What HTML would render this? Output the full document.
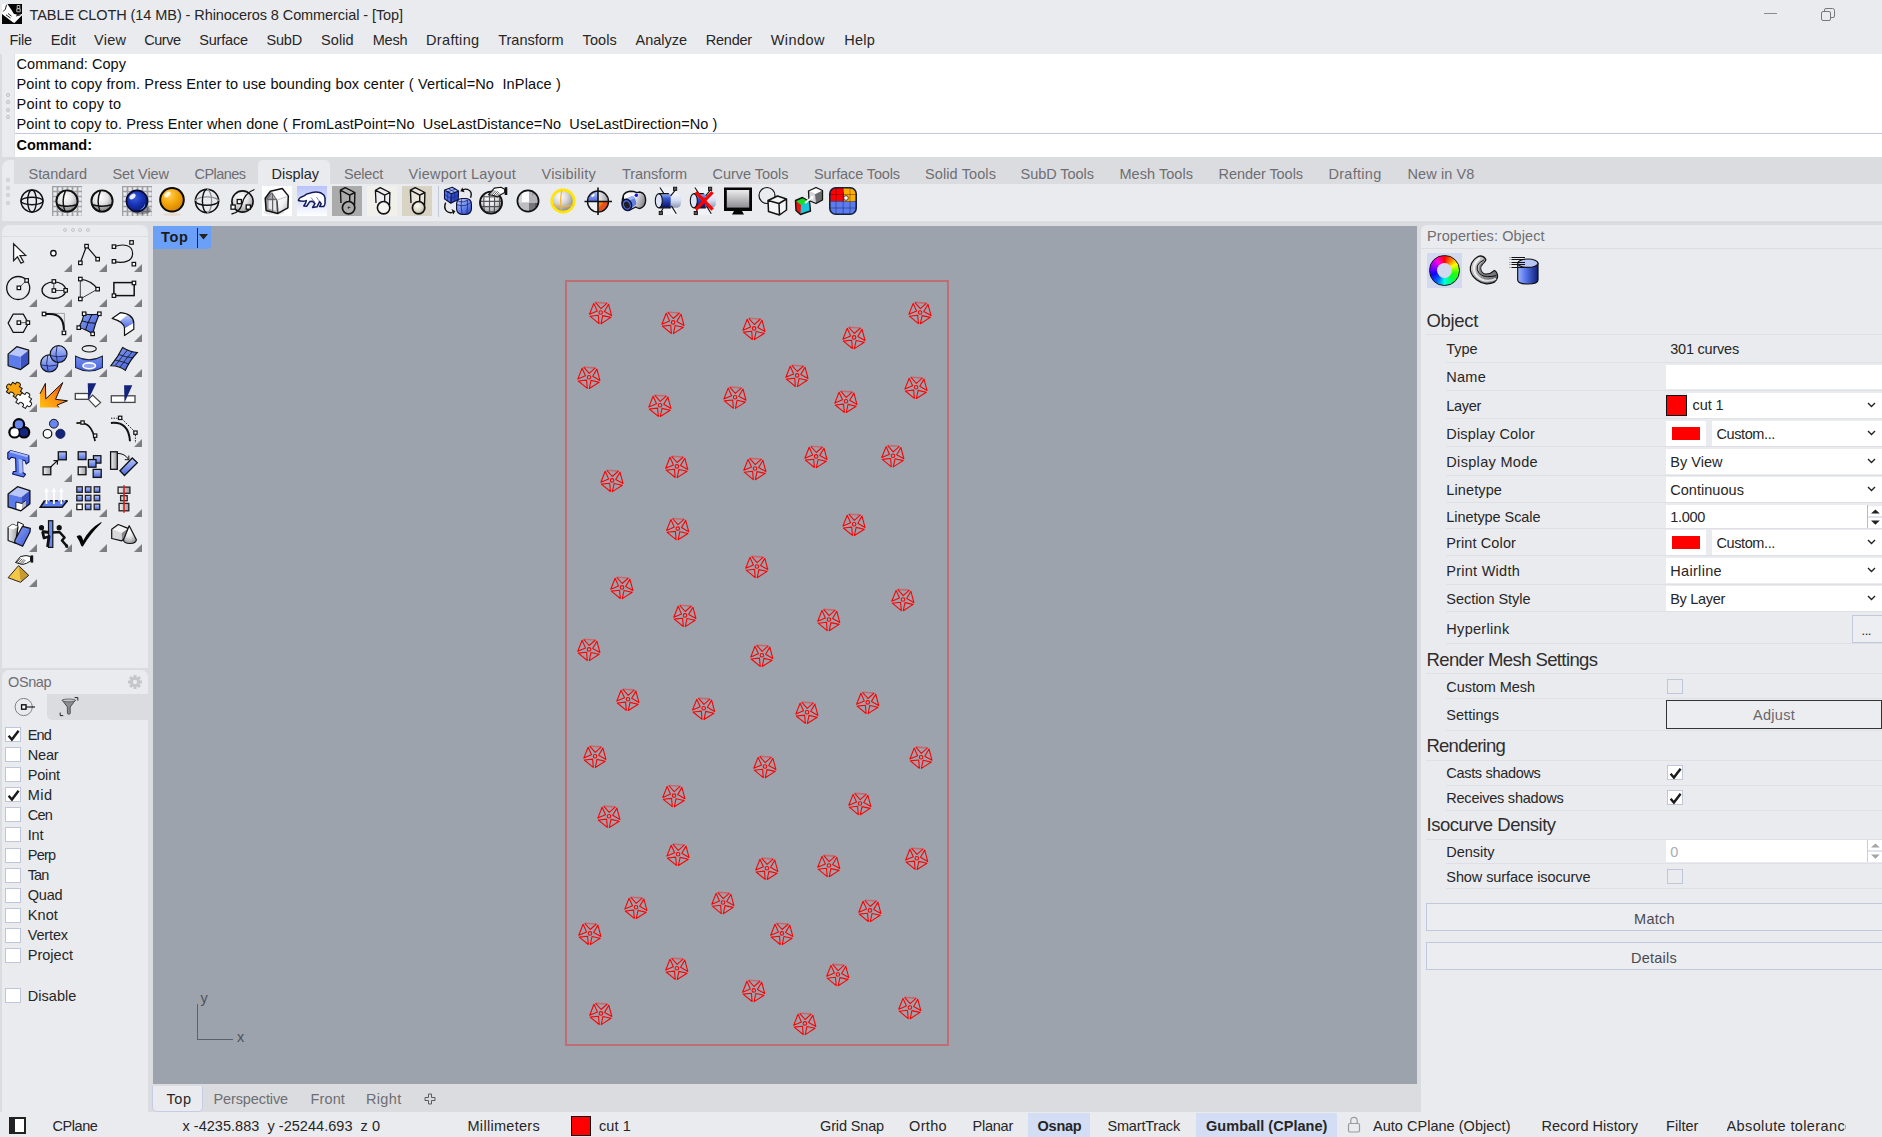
<!DOCTYPE html>
<html><head><meta charset="utf-8"><title>Rhino</title>
<style>
html,body{margin:0;padding:0;}
body{width:1882px;height:1137px;overflow:hidden;background:#eaebef;font-family:"Liberation Sans",sans-serif;position:relative;}
#r{position:absolute;left:0;top:0;width:1882px;height:1137px;overflow:hidden;}
#r div, #r svg{position:absolute;box-sizing:border-box;}
.t{white-space:pre;line-height:1;}
</style></head><body><div id="r">
<div style="left:0px;top:221px;width:1882px;height:5px;background:#dbdce0;"></div>
<div style="left:0px;top:221px;width:150px;height:14px;background:#dbdce0;"></div>
<div style="left:0px;top:668px;width:150px;height:10px;background:#dbdce0;"></div>
<div style="left:1417px;top:221px;width:465px;height:12px;background:#dbdce0;"></div>
<div style="left:0px;top:54px;width:2px;height:1058px;background:#dbdce0;"></div>
<div style="left:148px;top:221px;width:3px;height:891px;background:#dbdce0;"></div>
<div style="left:0px;top:52px;width:1882px;height:2px;background:#eaebef;"></div>
<div style="left:2px;top:54px;width:14px;height:103.3px;background:#eaebef;border-radius:5px 0 0 5px;"></div>
<div style="left:14px;top:54px;width:1px;height:103.3px;background:#e0e1e6;"></div>
<div style="left:15px;top:54px;width:1867px;height:103.3px;background:#ffffff;"></div>
<div style="left:15px;top:133px;width:1867px;height:1px;background:#c3c9dc;"></div>
<div style="left:5.6px;top:92.6px;width:4px;height:4px;border-radius:2px;border:1px solid #bcbdc2"></div>
<div style="left:5.6px;top:100.2px;width:4px;height:4px;border-radius:2px;border:1px solid #bcbdc2"></div>
<div style="left:5.6px;top:107.7px;width:4px;height:4px;border-radius:2px;border:1px solid #bcbdc2"></div>
<div style="left:5.6px;top:115.2px;width:4px;height:4px;border-radius:2px;border:1px solid #bcbdc2"></div>
<div style="left:0px;top:157px;width:1882px;height:27px;background:#dbdce0;"></div>
<div style="left:2px;top:160px;width:12px;height:60px;background:#eaebef;border-radius:8px 0 0 8px;"></div>
<div style="left:14px;top:184px;width:1868px;height:37px;background:#eaebef;"></div>
<div style="left:6px;top:178px;width:4px;height:4px;border-radius:2px;border:1px solid #c4c5ca"></div>
<div style="left:6px;top:186px;width:4px;height:4px;border-radius:2px;border:1px solid #c4c5ca"></div>
<div style="left:6px;top:193px;width:4px;height:4px;border-radius:2px;border:1px solid #c4c5ca"></div>
<div style="left:6px;top:201px;width:4px;height:4px;border-radius:2px;border:1px solid #c4c5ca"></div>
<div style="left:258px;top:160px;width:72px;height:25px;background:#eaebef;border-radius:5px 5px 0 0;"></div>
<div style="left:1764px;top:13px;width:13px;height:1px;background:#8a8a8e"></div>
<svg style="left:1821px;top:8px" width="14" height="13" viewBox="0 0 14 13"><rect x="0.5" y="3.5" width="9" height="9" rx="1.5" fill="none" stroke="#77777b"/><path d="M3.5 3.5 V2 Q3.5 0.5 5 0.5 H11.5 Q13.5 0.5 13.5 2.5 V8 Q13.5 9.5 12 9.5 H9.5" fill="none" stroke="#77777b"/></svg>
<div style="left:2px;top:225px;width:146px;height:443px;background:#eaebef;border-radius:7px 7px 0 0;"></div>
<div style="left:2px;top:236px;width:146px;height:1px;background:#dddee3;"></div>
<div style="left:63px;top:227.5px;width:4px;height:4px;border-radius:2px;border:1px solid #c4c5ca"></div>
<div style="left:70.5px;top:227.5px;width:4px;height:4px;border-radius:2px;border:1px solid #c4c5ca"></div>
<div style="left:78px;top:227.5px;width:4px;height:4px;border-radius:2px;border:1px solid #c4c5ca"></div>
<div style="left:85.5px;top:227.5px;width:4px;height:4px;border-radius:2px;border:1px solid #c4c5ca"></div>
<div style="left:0px;top:668px;width:150px;height:2px;background:#dbdce0;"></div>
<div style="left:2px;top:670px;width:146px;height:442px;background:#eaebef;border-radius:7px 7px 0 0;"></div>
<div style="left:47px;top:694px;width:101px;height:25.5px;background:#dbdce0;border-radius:0 0 0 5px;"></div>
<div style="left:5px;top:727px;width:16px;height:15px;background:#fff;border:1px solid #c0c6d9"><svg style="left:0.5px;top:1px" width="13" height="13" viewBox="0 0 13 13"><path d="M1.6 6.8 L4.9 10.6 L11.6 1.8" fill="none" stroke="#1a1a1a" stroke-width="2.4"/></svg></div>
<div style="left:5px;top:747px;width:16px;height:15px;background:#fff;border:1px solid #c0c6d9"></div>
<div style="left:5px;top:767px;width:16px;height:15px;background:#fff;border:1px solid #c0c6d9"></div>
<div style="left:5px;top:787px;width:16px;height:15px;background:#fff;border:1px solid #c0c6d9"><svg style="left:0.5px;top:1px" width="13" height="13" viewBox="0 0 13 13"><path d="M1.6 6.8 L4.9 10.6 L11.6 1.8" fill="none" stroke="#1a1a1a" stroke-width="2.4"/></svg></div>
<div style="left:5px;top:807px;width:16px;height:15px;background:#fff;border:1px solid #c0c6d9"></div>
<div style="left:5px;top:827px;width:16px;height:15px;background:#fff;border:1px solid #c0c6d9"></div>
<div style="left:5px;top:848px;width:16px;height:15px;background:#fff;border:1px solid #c0c6d9"></div>
<div style="left:5px;top:868px;width:16px;height:15px;background:#fff;border:1px solid #c0c6d9"></div>
<div style="left:5px;top:888px;width:16px;height:15px;background:#fff;border:1px solid #c0c6d9"></div>
<div style="left:5px;top:908px;width:16px;height:15px;background:#fff;border:1px solid #c0c6d9"></div>
<div style="left:5px;top:928px;width:16px;height:15px;background:#fff;border:1px solid #c0c6d9"></div>
<div style="left:5px;top:948px;width:16px;height:15px;background:#fff;border:1px solid #c0c6d9"></div>
<div style="left:5px;top:988px;width:16px;height:15px;background:#fff;border:1px solid #c0c6d9"></div>
<div style="left:150px;top:225px;width:1271px;height:887px;background:#dbdce0;"></div>
<div style="left:153px;top:226px;width:1264px;height:857.5px;background:#9da3ac;"></div>
<div style="left:153px;top:226px;width:58px;height:23px;background:#6aa0f7;border-radius:0 0 4px 0;"></div>
<div style="left:197px;top:228px;width:1px;height:20px;background:#222;"></div>
<svg style="left:199px;top:234px" width="9" height="6" viewBox="0 0 9 6"><path d="M0 0 H9 L4.5 5.5Z" fill="#222"/></svg>
<div style="left:197px;top:1004px;width:1px;height:36px;background:#5c6068;"></div>
<div style="left:197px;top:1039px;width:36px;height:1px;background:#5c6068;"></div>
<div style="left:151.5px;top:1085.5px;width:51.5px;height:26.3px;background:#eaebef;border-radius:0 0 5px 5px;border:1px solid #c5cde6;border-top:none;"></div>
<svg style="left:424px;top:1093px" width="12" height="12" viewBox="0 0 12 12"><path d="M4.5 1 H7.5 V4.5 H11 V7.5 H7.5 V11 H4.5 V7.5 H1 V4.5 H4.5Z" fill="none" stroke="#5b5b5f" stroke-width="1"/></svg>
<div style="left:0px;top:1112px;width:1882px;height:25px;background:#eaebef;"></div>
<div style="left:9px;top:1117px;width:17px;height:17px;border:2px solid #222;border-left-width:6px;background:#fff"></div>
<div style="left:570.5px;top:1115.5px;width:20px;height:20px;background:#ff0000;border:1.5px solid #111;"></div>
<div style="left:1027.5px;top:1113px;width:62.5px;height:24px;background:#d3ddf3;"></div>
<div style="left:1196px;top:1113px;width:140.5px;height:24px;background:#d3ddf3;"></div>
<svg style="left:1347px;top:1116px" width="14" height="17" viewBox="0 0 14 17"><rect x="1.5" y="7.5" width="11" height="8.5" rx="1.5" fill="none" stroke="#9a9a9e" stroke-width="1.2"/><path d="M3.8 7.5 V4.5 Q3.8 1.3 7 1.3 Q10.2 1.3 10.2 4.5 V7.5" fill="none" stroke="#9a9a9e" stroke-width="1.2"/></svg>
<div style="left:1421px;top:224.5px;width:461px;height:888px;background:#eaebef;border-radius:6px 0 0 0;"></div>
<div style="left:1421px;top:248px;width:461px;height:1px;background:#dcdde2;"></div>
<div style="left:1427px;top:253px;width:35px;height:35px;background:#d3daf0;"></div>
<div style="left:1426px;top:334px;width:456px;height:1px;background:#dfe0e5;"></div>
<div style="left:1446px;top:362px;width:436px;height:1px;background:#dfe0e5;"></div>
<div style="left:1446px;top:390px;width:436px;height:1px;background:#dfe0e5;"></div>
<div style="left:1446px;top:418px;width:436px;height:1px;background:#dfe0e5;"></div>
<div style="left:1446px;top:446px;width:436px;height:1px;background:#dfe0e5;"></div>
<div style="left:1446px;top:475px;width:436px;height:1px;background:#dfe0e5;"></div>
<div style="left:1446px;top:502px;width:436px;height:1px;background:#dfe0e5;"></div>
<div style="left:1446px;top:528px;width:436px;height:1px;background:#dfe0e5;"></div>
<div style="left:1446px;top:555px;width:436px;height:1px;background:#dfe0e5;"></div>
<div style="left:1446px;top:584px;width:436px;height:1px;background:#dfe0e5;"></div>
<div style="left:1446px;top:611px;width:436px;height:1px;background:#dfe0e5;"></div>
<div style="left:1446px;top:643px;width:436px;height:1px;background:#dfe0e5;"></div>
<div style="left:1666px;top:364.5px;width:216px;height:24.5px;background:#fff;"></div>
<div style="left:1687px;top:393px;width:195px;height:25px;background:#fff;"></div>
<div style="left:1666px;top:394.5px;width:21px;height:21px;background:#ff0000;border:1.5px solid #111;"></div>
<svg style="left:1866.5px;top:402px" width="9" height="6" viewBox="0 0 9 6"><path d="M1 1 L4.5 4.5 L8 1" fill="none" stroke="#222" stroke-width="1.4"/></svg>
<div style="left:1666px;top:420.7px;width:40px;height:25px;background:#fff;"></div>
<div style="left:1672px;top:427.2px;width:28px;height:12.5px;background:#ff0000;"></div>
<div style="left:1711.5px;top:420.7px;width:170.5px;height:25px;background:#fff;"></div>
<svg style="left:1866.5px;top:430px" width="9" height="6" viewBox="0 0 9 6"><path d="M1 1 L4.5 4.5 L8 1" fill="none" stroke="#222" stroke-width="1.4"/></svg>
<div style="left:1666px;top:529.6px;width:40px;height:25px;background:#fff;"></div>
<div style="left:1672px;top:536.1px;width:28px;height:12.5px;background:#ff0000;"></div>
<div style="left:1711.5px;top:529.6px;width:170.5px;height:25px;background:#fff;"></div>
<svg style="left:1866.5px;top:539px" width="9" height="6" viewBox="0 0 9 6"><path d="M1 1 L4.5 4.5 L8 1" fill="none" stroke="#222" stroke-width="1.4"/></svg>
<div style="left:1666px;top:448.7px;width:216px;height:25px;background:#fff;"></div>
<svg style="left:1866.5px;top:458px" width="9" height="6" viewBox="0 0 9 6"><path d="M1 1 L4.5 4.5 L8 1" fill="none" stroke="#222" stroke-width="1.4"/></svg>
<div style="left:1666px;top:476.7px;width:216px;height:25px;background:#fff;"></div>
<svg style="left:1866.5px;top:486px" width="9" height="6" viewBox="0 0 9 6"><path d="M1 1 L4.5 4.5 L8 1" fill="none" stroke="#222" stroke-width="1.4"/></svg>
<div style="left:1666px;top:557.6px;width:216px;height:25px;background:#fff;"></div>
<svg style="left:1866.5px;top:567px" width="9" height="6" viewBox="0 0 9 6"><path d="M1 1 L4.5 4.5 L8 1" fill="none" stroke="#222" stroke-width="1.4"/></svg>
<div style="left:1666px;top:585.6px;width:216px;height:25px;background:#fff;"></div>
<svg style="left:1866.5px;top:595px" width="9" height="6" viewBox="0 0 9 6"><path d="M1 1 L4.5 4.5 L8 1" fill="none" stroke="#222" stroke-width="1.4"/></svg>
<div style="left:1666px;top:505px;width:201px;height:23px;background:#fff;"></div>
<div style="left:1867px;top:505px;width:1px;height:23px;background:#b7bccd;"></div>
<svg style="left:1868px;top:505.5px" width="14" height="22" viewBox="0 0 14 22"><rect x="0" y="0" width="14" height="22" fill="#fff"/><path d="M0 11 H14" stroke="#c3c9dc" stroke-width="1"/><path d="M3 7.6 L7.4 3.4 L11.8 7.6Z M3 14.6 L7.4 18.8 L11.8 14.6Z" fill="#222"/></svg>
<div style="left:1851.5px;top:614.5px;width:31px;height:28px;background:#edeef2;border:1px solid #c3c9dc;"></div>
<div style="left:1426px;top:673px;width:456px;height:1px;background:#dfe0e5;"></div>
<div style="left:1667px;top:679px;width:15px;height:15px;background:#fff;border:1px solid #c6c9d6"></div>
<div style="left:1667px;top:679px;width:16px;height:15px;background:#eaebef;border:1px solid #c0c6d9"></div>
<div style="left:1446px;top:698px;width:436px;height:1px;background:#dfe0e5;"></div>
<div style="left:1666px;top:700px;width:216px;height:28.5px;background:#ecedf1;border:1.5px solid #333;"></div>
<div style="left:1446px;top:730px;width:436px;height:1px;background:#dfe0e5;"></div>
<div style="left:1426px;top:759.5px;width:456px;height:1px;background:#dfe0e5;"></div>
<div style="left:1667px;top:765px;width:16px;height:15px;background:#fff;border:1px solid #c0c6d9"><svg style="left:0.5px;top:1px" width="13" height="13" viewBox="0 0 13 13"><path d="M1.6 6.8 L4.9 10.6 L11.6 1.8" fill="none" stroke="#1a1a1a" stroke-width="2.4"/></svg></div>
<div style="left:1446px;top:784.5px;width:436px;height:1px;background:#dfe0e5;"></div>
<div style="left:1667px;top:790px;width:16px;height:15px;background:#fff;border:1px solid #c0c6d9"><svg style="left:0.5px;top:1px" width="13" height="13" viewBox="0 0 13 13"><path d="M1.6 6.8 L4.9 10.6 L11.6 1.8" fill="none" stroke="#1a1a1a" stroke-width="2.4"/></svg></div>
<div style="left:1446px;top:809.5px;width:436px;height:1px;background:#dfe0e5;"></div>
<div style="left:1426px;top:838.5px;width:456px;height:1px;background:#dfe0e5;"></div>
<div style="left:1666px;top:840px;width:201px;height:22px;background:#fff;"></div>
<div style="left:1867px;top:840px;width:1px;height:22px;background:#c9cddb;"></div>
<svg style="left:1868px;top:840px" width="14" height="22" viewBox="0 0 14 22"><rect x="0" y="0" width="14" height="22" fill="#fff"/><path d="M0 11 H14" stroke="#c3c9dc" stroke-width="1"/><path d="M3 7.6 L7.4 3.4 L11.8 7.6Z M3 14.6 L7.4 18.8 L11.8 14.6Z" fill="#a4a4a8"/></svg>
<div style="left:1446px;top:863px;width:436px;height:1px;background:#dfe0e5;"></div>
<div style="left:1667px;top:869px;width:16px;height:15px;background:#eaebef;border:1px solid #c0c6d9"></div>
<div style="left:1446px;top:887.6px;width:436px;height:1px;background:#dfe0e5;"></div>
<div style="left:1425.5px;top:902.7px;width:457px;height:28.3px;background:#ecedf1;border:1px solid #c3c9dc;"></div>
<div style="left:1425.5px;top:941.7px;width:457px;height:28.3px;background:#ecedf1;border:1px solid #c3c9dc;"></div>
<svg style="left:0;top:0" width="1882" height="1137" viewBox="0 0 1882 1137"><rect x="566" y="281" width="382" height="764" fill="none" stroke="#be6e73" stroke-width="2"/><path d="M595.4 302.4L607.1 303.1M667.8 312.3L679.5 313.0M748.8 318.3L760.5 319.0M848.8 327.3L860.5 328.0M914.8 302.4L926.5 303.1M583.7 367.2L595.4 367.9M791.8 365.3L803.5 366.0M910.8 377.2L922.5 377.9M654.7 395.2L666.4 395.9M729.8 387.1L741.5 387.8M840.7 391.2L852.4 391.9M810.8 446.3L822.5 447.0M887.7 445.6L899.4 446.3M671.6 456.3L683.3 457.0M749.7 458.4L761.4 459.1M606.8 470.3L618.5 471.0M672.5 518.5L684.2 519.2M848.8 514.2L860.5 514.9M751.6 556.4L763.3 557.1M616.7 577.3L628.4 578.0M897.7 589.4L909.4 590.1M679.7 605.3L691.4 606.0M823.6 609.4L835.3 610.1M583.7 639.3L595.4 640.0M756.6 645.2L768.3 645.9M622.7 689.2L634.4 689.9M698.4 698.2L710.1 698.9M801.7 702.2L813.4 702.9M862.5 692.3L874.2 693.0M589.7 746.2L601.4 746.9M759.7 756.4L771.4 757.1M915.8 747.1L927.5 747.8M668.7 785.5L680.4 786.2M854.7 793.4L866.4 794.1M603.7 806.2L615.4 806.9M672.8 844.2L684.5 844.9M761.6 858.2L773.3 858.9M823.6 855.4L835.3 856.1M911.5 848.2L923.2 848.9M630.7 897.2L642.4 897.9M717.7 892.4L729.4 893.1M864.7 900.3L876.4 901.0M584.7 923.3L596.4 924.0M776.6 923.3L788.3 924.0M671.6 958.2L683.3 958.9M832.6 964.4L844.3 965.1M748.5 980.3L760.2 981.0M595.6 1003.3L607.3 1004.0M904.6 997.4L916.3 998.1M799.6 1013.3L811.3 1014.0" fill="none" stroke="#c8686e" stroke-width="1.6"/><g fill="none" stroke="#ff0000" stroke-width="1.1" stroke-linejoin="round"><path d="M599.0 323.6L590.0 316.2L598.3 315.3ZM589.5 314.3L593.8 303.4L597.2 311.0ZM595.4 302.4L600.9 308.6L607.1 303.1M608.6 304.3L611.6 315.6L604.4 311.5ZM610.9 317.4L601.0 323.7L602.7 315.6ZM671.4 333.5L662.4 326.1L670.7 325.2ZM661.9 324.2L666.2 313.3L669.6 320.9ZM667.8 312.3L673.3 318.5L679.5 313.0M681.0 314.2L684.0 325.5L676.8 321.4ZM683.3 327.3L673.4 333.6L675.1 325.5ZM752.4 339.5L743.4 332.1L751.7 331.2ZM742.9 330.2L747.2 319.3L750.6 326.9ZM748.8 318.3L754.3 324.5L760.5 319.0M762.0 320.2L765.0 331.5L757.8 327.4ZM764.3 333.3L754.4 339.6L756.1 331.5ZM852.4 348.5L843.4 341.1L851.7 340.2ZM842.9 339.2L847.2 328.3L850.6 335.9ZM848.8 327.3L854.3 333.5L860.5 328.0M862.0 329.2L865.0 340.5L857.8 336.4ZM864.3 342.3L854.4 348.6L856.1 340.5ZM918.4 323.6L909.4 316.2L917.7 315.3ZM908.9 314.3L913.2 303.4L916.6 311.0ZM914.8 302.4L920.3 308.6L926.5 303.1M928.0 304.3L931.0 315.6L923.8 311.5ZM930.3 317.4L920.4 323.7L922.1 315.6ZM587.3 388.4L578.3 381.0L586.6 380.1ZM577.8 379.1L582.1 368.2L585.5 375.8ZM583.7 367.2L589.2 373.4L595.4 367.9M596.9 369.1L599.9 380.4L592.7 376.3ZM599.2 382.2L589.3 388.5L591.0 380.4ZM795.4 386.5L786.4 379.1L794.7 378.2ZM785.9 377.2L790.2 366.3L793.6 373.9ZM791.8 365.3L797.3 371.5L803.5 366.0M805.0 367.2L808.0 378.5L800.8 374.4ZM807.3 380.3L797.4 386.6L799.1 378.5ZM914.4 398.4L905.4 391.0L913.7 390.1ZM904.9 389.1L909.2 378.2L912.6 385.8ZM910.8 377.2L916.3 383.4L922.5 377.9M924.0 379.1L927.0 390.4L919.8 386.3ZM926.3 392.2L916.4 398.5L918.1 390.4ZM658.3 416.4L649.3 409.0L657.6 408.1ZM648.8 407.1L653.1 396.2L656.5 403.8ZM654.7 395.2L660.2 401.4L666.4 395.9M667.9 397.1L670.9 408.4L663.7 404.3ZM670.2 410.2L660.3 416.5L662.0 408.4ZM733.4 408.3L724.4 400.9L732.7 400.0ZM723.9 399.0L728.2 388.1L731.6 395.7ZM729.8 387.1L735.3 393.3L741.5 387.8M743.0 389.0L746.0 400.3L738.8 396.2ZM745.3 402.1L735.4 408.4L737.1 400.3ZM844.3 412.4L835.3 405.0L843.6 404.1ZM834.8 403.1L839.1 392.2L842.5 399.8ZM840.7 391.2L846.2 397.4L852.4 391.9M853.9 393.1L856.9 404.4L849.7 400.3ZM856.2 406.2L846.3 412.5L848.0 404.4ZM814.4 467.5L805.4 460.1L813.7 459.2ZM804.9 458.2L809.2 447.3L812.6 454.9ZM810.8 446.3L816.3 452.5L822.5 447.0M824.0 448.2L827.0 459.5L819.8 455.4ZM826.3 461.3L816.4 467.6L818.1 459.5ZM891.3 466.8L882.3 459.4L890.6 458.5ZM881.8 457.5L886.1 446.6L889.5 454.2ZM887.7 445.6L893.2 451.8L899.4 446.3M900.9 447.5L903.9 458.8L896.7 454.7ZM903.2 460.6L893.3 466.9L895.0 458.8ZM675.2 477.5L666.2 470.1L674.5 469.2ZM665.7 468.2L670.0 457.3L673.4 464.9ZM671.6 456.3L677.1 462.5L683.3 457.0M684.8 458.2L687.8 469.5L680.6 465.4ZM687.1 471.3L677.2 477.6L678.9 469.5ZM753.3 479.6L744.3 472.2L752.6 471.3ZM743.8 470.3L748.1 459.4L751.5 467.0ZM749.7 458.4L755.2 464.6L761.4 459.1M762.9 460.3L765.9 471.6L758.7 467.5ZM765.2 473.4L755.3 479.7L757.0 471.6ZM610.4 491.5L601.4 484.1L609.7 483.2ZM600.9 482.2L605.2 471.3L608.6 478.9ZM606.8 470.3L612.3 476.5L618.5 471.0M620.0 472.2L623.0 483.5L615.8 479.4ZM622.3 485.3L612.4 491.6L614.1 483.5ZM676.1 539.7L667.1 532.3L675.4 531.4ZM666.6 530.4L670.9 519.5L674.3 527.1ZM672.5 518.5L678.0 524.7L684.2 519.2M685.7 520.4L688.7 531.7L681.5 527.6ZM688.0 533.5L678.1 539.8L679.8 531.7ZM852.4 535.4L843.4 528.0L851.7 527.1ZM842.9 526.1L847.2 515.2L850.6 522.8ZM848.8 514.2L854.3 520.4L860.5 514.9M862.0 516.1L865.0 527.4L857.8 523.3ZM864.3 529.2L854.4 535.5L856.1 527.4ZM755.2 577.6L746.2 570.2L754.5 569.3ZM745.7 568.3L750.0 557.4L753.4 565.0ZM751.6 556.4L757.1 562.6L763.3 557.1M764.8 558.3L767.8 569.6L760.6 565.5ZM767.1 571.4L757.2 577.7L758.9 569.6ZM620.3 598.5L611.3 591.1L619.6 590.2ZM610.8 589.2L615.1 578.3L618.5 585.9ZM616.7 577.3L622.2 583.5L628.4 578.0M629.9 579.2L632.9 590.5L625.7 586.4ZM632.2 592.3L622.3 598.6L624.0 590.5ZM901.3 610.6L892.3 603.2L900.6 602.3ZM891.8 601.3L896.1 590.4L899.5 598.0ZM897.7 589.4L903.2 595.6L909.4 590.1M910.9 591.3L913.9 602.6L906.7 598.5ZM913.2 604.4L903.3 610.7L905.0 602.6ZM683.3 626.5L674.3 619.1L682.6 618.2ZM673.8 617.2L678.1 606.3L681.5 613.9ZM679.7 605.3L685.2 611.5L691.4 606.0M692.9 607.2L695.9 618.5L688.7 614.4ZM695.2 620.3L685.3 626.6L687.0 618.5ZM827.2 630.6L818.2 623.2L826.5 622.3ZM817.7 621.3L822.0 610.4L825.4 618.0ZM823.6 609.4L829.1 615.6L835.3 610.1M836.8 611.3L839.8 622.6L832.6 618.5ZM839.1 624.4L829.2 630.7L830.9 622.6ZM587.3 660.5L578.3 653.1L586.6 652.2ZM577.8 651.2L582.1 640.3L585.5 647.9ZM583.7 639.3L589.2 645.5L595.4 640.0M596.9 641.2L599.9 652.5L592.7 648.4ZM599.2 654.3L589.3 660.6L591.0 652.5ZM760.2 666.4L751.2 659.0L759.5 658.1ZM750.7 657.1L755.0 646.2L758.4 653.8ZM756.6 645.2L762.1 651.4L768.3 645.9M769.8 647.1L772.8 658.4L765.6 654.3ZM772.1 660.2L762.2 666.5L763.9 658.4ZM626.3 710.4L617.3 703.0L625.6 702.1ZM616.8 701.1L621.1 690.2L624.5 697.8ZM622.7 689.2L628.2 695.4L634.4 689.9M635.9 691.1L638.9 702.4L631.7 698.3ZM638.2 704.2L628.3 710.5L630.0 702.4ZM702.0 719.4L693.0 712.0L701.3 711.1ZM692.5 710.1L696.8 699.2L700.2 706.8ZM698.4 698.2L703.9 704.4L710.1 698.9M711.6 700.1L714.6 711.4L707.4 707.3ZM713.9 713.2L704.0 719.5L705.7 711.4ZM805.3 723.4L796.3 716.0L804.6 715.1ZM795.8 714.1L800.1 703.2L803.5 710.8ZM801.7 702.2L807.2 708.4L813.4 702.9M814.9 704.1L817.9 715.4L810.7 711.3ZM817.2 717.2L807.3 723.5L809.0 715.4ZM866.1 713.5L857.1 706.1L865.4 705.2ZM856.6 704.2L860.9 693.3L864.3 700.9ZM862.5 692.3L868.0 698.5L874.2 693.0M875.7 694.2L878.7 705.5L871.5 701.4ZM878.0 707.3L868.1 713.6L869.8 705.5ZM593.3 767.4L584.3 760.0L592.6 759.1ZM583.8 758.1L588.1 747.2L591.5 754.8ZM589.7 746.2L595.2 752.4L601.4 746.9M602.9 748.1L605.9 759.4L598.7 755.3ZM605.2 761.2L595.3 767.5L597.0 759.4ZM763.3 777.6L754.3 770.2L762.6 769.3ZM753.8 768.3L758.1 757.4L761.5 765.0ZM759.7 756.4L765.2 762.6L771.4 757.1M772.9 758.3L775.9 769.6L768.7 765.5ZM775.2 771.4L765.3 777.7L767.0 769.6ZM919.4 768.3L910.4 760.9L918.7 760.0ZM909.9 759.0L914.2 748.1L917.6 755.7ZM915.8 747.1L921.3 753.3L927.5 747.8M929.0 749.0L932.0 760.3L924.8 756.2ZM931.3 762.1L921.4 768.4L923.1 760.3ZM672.3 806.7L663.3 799.3L671.6 798.4ZM662.8 797.4L667.1 786.5L670.5 794.1ZM668.7 785.5L674.2 791.7L680.4 786.2M681.9 787.4L684.9 798.7L677.7 794.6ZM684.2 800.5L674.3 806.8L676.0 798.7ZM858.3 814.6L849.3 807.2L857.6 806.3ZM848.8 805.3L853.1 794.4L856.5 802.0ZM854.7 793.4L860.2 799.6L866.4 794.1M867.9 795.3L870.9 806.6L863.7 802.5ZM870.2 808.4L860.3 814.7L862.0 806.6ZM607.3 827.4L598.3 820.0L606.6 819.1ZM597.8 818.1L602.1 807.2L605.5 814.8ZM603.7 806.2L609.2 812.4L615.4 806.9M616.9 808.1L619.9 819.4L612.7 815.3ZM619.2 821.2L609.3 827.5L611.0 819.4ZM676.4 865.4L667.4 858.0L675.7 857.1ZM666.9 856.1L671.2 845.2L674.6 852.8ZM672.8 844.2L678.3 850.4L684.5 844.9M686.0 846.1L689.0 857.4L681.8 853.3ZM688.3 859.2L678.4 865.5L680.1 857.4ZM765.2 879.4L756.2 872.0L764.5 871.1ZM755.7 870.1L760.0 859.2L763.4 866.8ZM761.6 858.2L767.1 864.4L773.3 858.9M774.8 860.1L777.8 871.4L770.6 867.3ZM777.1 873.2L767.2 879.5L768.9 871.4ZM827.2 876.6L818.2 869.2L826.5 868.3ZM817.7 867.3L822.0 856.4L825.4 864.0ZM823.6 855.4L829.1 861.6L835.3 856.1M836.8 857.3L839.8 868.6L832.6 864.5ZM839.1 870.4L829.2 876.7L830.9 868.6ZM915.1 869.4L906.1 862.0L914.4 861.1ZM905.6 860.1L909.9 849.2L913.3 856.8ZM911.5 848.2L917.0 854.4L923.2 848.9M924.7 850.1L927.7 861.4L920.5 857.3ZM927.0 863.2L917.1 869.5L918.8 861.4ZM634.3 918.4L625.3 911.0L633.6 910.1ZM624.8 909.1L629.1 898.2L632.5 905.8ZM630.7 897.2L636.2 903.4L642.4 897.9M643.9 899.1L646.9 910.4L639.7 906.3ZM646.2 912.2L636.3 918.5L638.0 910.4ZM721.3 913.6L712.3 906.2L720.6 905.3ZM711.8 904.3L716.1 893.4L719.5 901.0ZM717.7 892.4L723.2 898.6L729.4 893.1M730.9 894.3L733.9 905.6L726.7 901.5ZM733.2 907.4L723.3 913.7L725.0 905.6ZM868.3 921.5L859.3 914.1L867.6 913.2ZM858.8 912.2L863.1 901.3L866.5 908.9ZM864.7 900.3L870.2 906.5L876.4 901.0M877.9 902.2L880.9 913.5L873.7 909.4ZM880.2 915.3L870.3 921.6L872.0 913.5ZM588.3 944.5L579.3 937.1L587.6 936.2ZM578.8 935.2L583.1 924.3L586.5 931.9ZM584.7 923.3L590.2 929.5L596.4 924.0M597.9 925.2L600.9 936.5L593.7 932.4ZM600.2 938.3L590.3 944.6L592.0 936.5ZM780.2 944.5L771.2 937.1L779.5 936.2ZM770.7 935.2L775.0 924.3L778.4 931.9ZM776.6 923.3L782.1 929.5L788.3 924.0M789.8 925.2L792.8 936.5L785.6 932.4ZM792.1 938.3L782.2 944.6L783.9 936.5ZM675.2 979.4L666.2 972.0L674.5 971.1ZM665.7 970.1L670.0 959.2L673.4 966.8ZM671.6 958.2L677.1 964.4L683.3 958.9M684.8 960.1L687.8 971.4L680.6 967.3ZM687.1 973.2L677.2 979.5L678.9 971.4ZM836.2 985.6L827.2 978.2L835.5 977.3ZM826.7 976.3L831.0 965.4L834.4 973.0ZM832.6 964.4L838.1 970.6L844.3 965.1M845.8 966.3L848.8 977.6L841.6 973.5ZM848.1 979.4L838.2 985.7L839.9 977.6ZM752.1 1001.5L743.1 994.1L751.4 993.2ZM742.6 992.2L746.9 981.3L750.3 988.9ZM748.5 980.3L754.0 986.5L760.2 981.0M761.7 982.2L764.7 993.5L757.5 989.4ZM764.0 995.3L754.1 1001.6L755.8 993.5ZM599.2 1024.5L590.2 1017.1L598.5 1016.2ZM589.7 1015.2L594.0 1004.3L597.4 1011.9ZM595.6 1003.3L601.1 1009.5L607.3 1004.0M608.8 1005.2L611.8 1016.5L604.6 1012.4ZM611.1 1018.3L601.2 1024.6L602.9 1016.5ZM908.2 1018.6L899.2 1011.2L907.5 1010.3ZM898.7 1009.3L903.0 998.4L906.4 1006.0ZM904.6 997.4L910.1 1003.6L916.3 998.1M917.8 999.3L920.8 1010.6L913.6 1006.5ZM920.1 1012.4L910.2 1018.7L911.9 1010.6ZM803.2 1034.5L794.2 1027.1L802.5 1026.2ZM793.7 1025.2L798.0 1014.3L801.4 1021.9ZM799.6 1013.3L805.1 1019.5L811.3 1014.0M812.8 1015.2L815.8 1026.5L808.6 1022.4ZM815.1 1028.3L805.2 1034.6L806.9 1026.5Z"/><circle cx="600.7" cy="312.5" r="1.75"/><circle cx="673.1" cy="322.4" r="1.75"/><circle cx="754.1" cy="328.4" r="1.75"/><circle cx="854.1" cy="337.4" r="1.75"/><circle cx="920.1" cy="312.5" r="1.75"/><circle cx="589.0" cy="377.3" r="1.75"/><circle cx="797.1" cy="375.4" r="1.75"/><circle cx="916.1" cy="387.3" r="1.75"/><circle cx="660.0" cy="405.3" r="1.75"/><circle cx="735.1" cy="397.2" r="1.75"/><circle cx="846.0" cy="401.3" r="1.75"/><circle cx="816.1" cy="456.4" r="1.75"/><circle cx="893.0" cy="455.7" r="1.75"/><circle cx="676.9" cy="466.4" r="1.75"/><circle cx="755.0" cy="468.5" r="1.75"/><circle cx="612.1" cy="480.4" r="1.75"/><circle cx="677.8" cy="528.6" r="1.75"/><circle cx="854.1" cy="524.3" r="1.75"/><circle cx="756.9" cy="566.5" r="1.75"/><circle cx="622.0" cy="587.4" r="1.75"/><circle cx="903.0" cy="599.5" r="1.75"/><circle cx="685.0" cy="615.4" r="1.75"/><circle cx="828.9" cy="619.5" r="1.75"/><circle cx="589.0" cy="649.4" r="1.75"/><circle cx="761.9" cy="655.3" r="1.75"/><circle cx="628.0" cy="699.3" r="1.75"/><circle cx="703.7" cy="708.3" r="1.75"/><circle cx="807.0" cy="712.3" r="1.75"/><circle cx="867.8" cy="702.4" r="1.75"/><circle cx="595.0" cy="756.3" r="1.75"/><circle cx="765.0" cy="766.5" r="1.75"/><circle cx="921.1" cy="757.2" r="1.75"/><circle cx="674.0" cy="795.6" r="1.75"/><circle cx="860.0" cy="803.5" r="1.75"/><circle cx="609.0" cy="816.3" r="1.75"/><circle cx="678.1" cy="854.3" r="1.75"/><circle cx="766.9" cy="868.3" r="1.75"/><circle cx="828.9" cy="865.5" r="1.75"/><circle cx="916.8" cy="858.3" r="1.75"/><circle cx="636.0" cy="907.3" r="1.75"/><circle cx="723.0" cy="902.5" r="1.75"/><circle cx="870.0" cy="910.4" r="1.75"/><circle cx="590.0" cy="933.4" r="1.75"/><circle cx="781.9" cy="933.4" r="1.75"/><circle cx="676.9" cy="968.3" r="1.75"/><circle cx="837.9" cy="974.5" r="1.75"/><circle cx="753.8" cy="990.4" r="1.75"/><circle cx="600.9" cy="1013.4" r="1.75"/><circle cx="909.9" cy="1007.5" r="1.75"/><circle cx="804.9" cy="1023.4" r="1.75"/></g></svg>
<svg style="left:0;top:0" width="0" height="0"><defs>
<radialGradient id="gW" cx="0.42" cy="0.32" r="0.75"><stop offset="0" stop-color="#fff"/><stop offset="0.45" stop-color="#e4e4e6"/><stop offset="1" stop-color="#8d8d90"/></radialGradient>
<radialGradient id="gB" cx="0.4" cy="0.35" r="0.7"><stop offset="0" stop-color="#3a5fe0"/><stop offset="0.5" stop-color="#1733b4"/><stop offset="1" stop-color="#0a1670"/></radialGradient>
<radialGradient id="gO" cx="0.38" cy="0.3" r="0.8"><stop offset="0" stop-color="#ffd05a"/><stop offset="0.45" stop-color="#f5a80c"/><stop offset="1" stop-color="#c87a00"/></radialGradient>
<radialGradient id="gC" cx="0.4" cy="0.35" r="0.75"><stop offset="0" stop-color="#fbf9f0"/><stop offset="0.6" stop-color="#d9d4c3"/><stop offset="1" stop-color="#8f8a7a"/></radialGradient>
<linearGradient id="gArc" x1="0" y1="0" x2="0" y2="1"><stop offset="0" stop-color="#b9c2fa"/><stop offset="0.55" stop-color="#dfe3fb"/><stop offset="1" stop-color="#ffffff"/></linearGradient>
<linearGradient id="gMon" x1="0" y1="0" x2="0" y2="1"><stop offset="0" stop-color="#ececee"/><stop offset="1" stop-color="#8f8f93"/></linearGradient>
<linearGradient id="gCyl" x1="0" y1="0" x2="0" y2="1"><stop offset="0" stop-color="#9fb4f2"/><stop offset="0.35" stop-color="#3355d0"/><stop offset="1" stop-color="#071060"/></linearGradient>
<linearGradient id="gCylL" x1="0" y1="0" x2="0" y2="1"><stop offset="0" stop-color="#eef1fb"/><stop offset="0.5" stop-color="#c9d2ee"/><stop offset="1" stop-color="#8d98b8"/></linearGradient>
<linearGradient id="gBl" x1="0" y1="0" x2="1" y2="1"><stop offset="0" stop-color="#8aa2f5"/><stop offset="1" stop-color="#3a57d6"/></linearGradient>
<linearGradient id="gBl2" x1="0" y1="0" x2="0" y2="1"><stop offset="0" stop-color="#b9c8fb"/><stop offset="1" stop-color="#4a68e0"/></linearGradient>
<linearGradient id="gGr" x1="0" y1="0" x2="1" y2="0"><stop offset="0" stop-color="#f4f4f6"/><stop offset="1" stop-color="#9b9ba0"/></linearGradient>
<pattern id="pGrid" width="5" height="5" patternUnits="userSpaceOnUse"><path d="M1.5 0V5M0 1.5H5" stroke="#a0a0a3" stroke-width="1.7" fill="none"/></pattern>
</defs></svg>
<svg style="left:16.0px;top:185.0px" width="32" height="32" viewBox="0 0 32 32"><g fill="none" stroke="#111" stroke-width="1.4"><circle cx="16" cy="16" r="11"/><ellipse cx="16" cy="16" rx="4.4" ry="11"/><ellipse cx="16" cy="16" rx="11" ry="3.7"/></g></svg>
<svg style="left:51.0px;top:185.0px" width="32" height="32" viewBox="0 0 32 32"><rect x="1" y="1" width="30" height="30" fill="url(#pGrid)"/><circle cx="16" cy="16" r="10.6" fill="url(#gW)" stroke="#111" stroke-width="1.9"/><path d="M5.6 19.5 Q16 23 26.4 19.5 A10.6 10.6 0 0 1 5.6 19.5Z" fill="#00000022"/><path d="M5.6 19.5 Q16 23 26.4 19.5 M14.5 5.6 Q10 16 14 26.4" fill="none" stroke="#111" stroke-width="1.4"/></svg>
<svg style="left:86.0px;top:185.0px" width="32" height="32" viewBox="0 0 32 32"><circle cx="16" cy="16" r="10.6" fill="url(#gW)" stroke="#111" stroke-width="1.9"/><path d="M5.6 19.5 Q16 23 26.4 19.5 A10.6 10.6 0 0 1 5.6 19.5Z" fill="#00000022"/><path d="M5.6 19.5 Q16 23 26.4 19.5 M14.5 5.6 Q10 16 14 26.4" fill="none" stroke="#111" stroke-width="1.4"/></svg>
<svg style="left:121.0px;top:185.0px" width="32" height="32" viewBox="0 0 32 32"><rect x="1" y="1" width="30" height="30" fill="url(#pGrid)"/><ellipse cx="20" cy="25" rx="10" ry="4.5" fill="#00000055"/><circle cx="16" cy="16" r="10.6" fill="url(#gB)" stroke="#060a30" stroke-width="1.6"/><ellipse cx="11.5" cy="11.5" rx="3.6" ry="2.2" transform="rotate(-40 11.5 11.5)" fill="#e8eeff"/><path d="M18.5 25 Q23 23 24 18.5 Q24.5 23.5 18.5 25Z" fill="#7fd0ff"/></svg>
<svg style="left:156.0px;top:185.0px" width="32" height="32" viewBox="0 0 32 32"><ellipse cx="16" cy="29.5" rx="9.5" ry="1.3" fill="#e8b98055"/><circle cx="16" cy="14.8" r="11.8" fill="url(#gO)" stroke="#0c0800" stroke-width="2"/><ellipse cx="11.5" cy="9.5" rx="3.6" ry="2.1" transform="rotate(-38 11.5 9.5)" fill="#fff6dc"/></svg>
<svg style="left:191.0px;top:185.0px" width="32" height="32" viewBox="0 0 32 32"><circle cx="16" cy="16" r="11.6" fill="#e9ebf2" stroke="#111" stroke-width="1.6"/><g fill="none" stroke="#8d8d92" stroke-width="1.3"><path d="M4.4 16 A11.6 4.2 0 0 1 27.6 16"/><path d="M16 4.4 A4.6 11.6 0 0 1 16 27.6"/></g><g fill="none" stroke="#111" stroke-width="1.4"><path d="M4.4 16 A11.6 4.2 0 0 0 27.6 16"/><path d="M16 4.4 A4.6 11.6 0 0 0 16 27.6"/></g></svg>
<svg style="left:226.0px;top:185.0px" width="32" height="32" viewBox="0 0 32 32"><circle cx="16.5" cy="16.5" r="10.6" fill="url(#gW)" stroke="#111" stroke-width="1.6"/><path d="M5.5 29 Q14 27.5 16 19 Q18.5 8 28.5 4.5" fill="none" stroke="#111" stroke-width="1.3"/><g fill="#fff" stroke="#111" stroke-width="1.3"><rect x="11.2" y="14.5" width="4.2" height="4.2"/><rect x="5" y="20" width="4.2" height="4.2"/><rect x="20.2" y="20" width="4.2" height="4.2"/></g></svg>
<svg style="left:261.0px;top:185.0px" width="32" height="32" viewBox="0 0 32 32"><rect x="1" y="1" width="30" height="30" fill="#fff"/><linearGradient id="gH1" x1="0" y1="0" x2="1" y2="1"><stop offset="0" stop-color="#ffffff"/><stop offset="0.5" stop-color="#f0f0f2"/><stop offset="1" stop-color="#a9a9ae"/></linearGradient><linearGradient id="gH2" x1="0" y1="0" x2="1" y2="0"><stop offset="0" stop-color="#8e8e92"/><stop offset="1" stop-color="#c9c9cd"/></linearGradient><ellipse cx="13" cy="27.6" rx="11" ry="2.2" fill="#00000018"/><path d="M9.4 6.3 L21.3 3.5 L27.3 10.9 L15.9 15.2Z" fill="#fbfbfc"/><path d="M15.9 15.2 L27.3 10.9 L26.9 22.8 L16.9 28.4Z" fill="url(#gH1)"/><path d="M4.2 13.3 L9.4 6.3 L15.9 15.2 L16.9 28.4 L5.1 25.4Z" fill="url(#gH2)"/><path d="M7.6 15.4 H11 V24.6 L7.6 23.6Z M12.3 15.4 H15 V25.6 L12.3 24.9Z" fill="#e9e9ec"/><path d="M5.7 14.3 L10.9 7.7 L15.9 15.2 M5.7 14.3 H15.9 M11.6 8.3 V26.4" fill="none" stroke="#5c5c60" stroke-width="1"/><path d="M15.9 15.2 L16.9 28.4" stroke="#4a4a4e" stroke-width="1.6"/><path d="M15.9 15.2 L25.8 11.6" stroke="#b5b5b9" stroke-width="0.8"/><path d="M4.2 13.3 L9.4 6.3 L21.3 3.5 L27.3 10.9 L26.9 22.8 L16.9 28.4 L5.1 25.4Z" fill="none" stroke="#111" stroke-width="1.5" stroke-linejoin="round"/></svg>
<svg style="left:296.0px;top:185.0px" width="32" height="32" viewBox="0 0 32 32"><rect x="1" y="1" width="30" height="30" fill="url(#gArc)"/><path d="M2.4 15.2 Q3 13.2 5 12.2 L8.5 10.6 Q10.5 8.9 12.5 8.6 Q16 7 19.8 7 Q25 7 28 10.2 Q29.5 12.8 29 15.7 Q29.3 18 28.7 19.8 L27.6 21.6 L23.6 21.6 L25.2 18.6 L23.6 16.6 L21 21.8 L16.6 22.4 L19 18.6 L16.5 16.2 L13.8 16.6 L10.6 21.2 L7.8 21 L9.8 17.6 L10.3 15.6 Q7 16.6 4.9 15.9 Q3 16 2.4 15.2Z" fill="#fff" stroke="#101a5c" stroke-width="1.5" stroke-linejoin="round"/><path d="M15 12.5 Q16.5 15 19 17 M20.5 12 Q22 14.5 23.6 16.4" fill="none" stroke="#5a68a8" stroke-width="0.8"/></svg>
<svg style="left:331.0px;top:185.0px" width="32" height="32" viewBox="0 0 32 32"><rect x="1" y="1" width="30" height="30" fill="#ababab"/><path d="M9.4 5.2 L14.2 2.6 L23.9 7.5 L23.5 20 L10 18Z" fill="none"/><path d="M9.4 5.2 L14.2 2.6 L23.9 7.5 L18.7 10.1Z M9.4 5.2 L10 18 M18.7 10.1 V17 M23.9 7.5 L23.5 20" fill="none" stroke="#111" stroke-width="1.4" stroke-linejoin="round"/><circle cx="17.6" cy="22.7" r="6.2" fill="#ababab" stroke="#111" stroke-width="1.7"/><path d="M16.5 22.5 l3 0 M18 21 l-0.6 3" stroke="#222" stroke-width="0.7"/></svg>
<svg style="left:366.0px;top:185.0px" width="32" height="32" viewBox="0 0 32 32"><rect x="1" y="1" width="30" height="30" fill="#f1f0ea"/><path d="M9.4 5.2 L14.2 2.6 L23.9 7.5 L23.5 20 L10 18Z" fill="#eeeef3"/><path d="M9.4 5.2 L14.2 2.6 L23.9 7.5 L18.7 10.1Z M9.4 5.2 L10 18 M18.7 10.1 V17 M23.9 7.5 L23.5 20" fill="none" stroke="#111" stroke-width="1.3" stroke-linejoin="round"/><circle cx="17.6" cy="22.7" r="6.2" fill="#f6f6f3" stroke="#111" stroke-width="1.6"/></svg>
<svg style="left:401.0px;top:185.0px" width="32" height="32" viewBox="0 0 32 32"><rect x="1" y="1" width="30" height="30" fill="#d8d3c2"/><path d="M9.4 5.2 L14.2 2.6 L23.9 7.5 L23.5 20 L10 18Z" fill="#e9e5d8"/><path d="M9.4 5.2 L14.2 2.6 L23.9 7.5 L18.7 10.1Z M9.4 5.2 L10 18 M18.7 10.1 V17 M23.9 7.5 L23.5 20" fill="none" stroke="#111" stroke-width="1.4" stroke-linejoin="round"/><circle cx="17.6" cy="22.7" r="6.2" fill="url(#gC)" stroke="#111" stroke-width="1.7"/></svg>
<div style="left:438px;top:186px;width:1px;height:31px;background:#c3c9dc;"></div>
<svg style="left:442.0px;top:185.0px" width="32" height="32" viewBox="0 0 32 32"><path d="M10.3 2.3 L16.6 5.9 L9.2 8.7 L2.5 5.1Z" fill="#a9bdf8"/><path d="M2.5 5.1 L9.2 8.7 L8.8 18.3 L2.5 13.9Z" fill="#4c6cea"/><path d="M16.6 5.9 L9.2 8.7 L8.8 18.3 L16.2 14.6Z" fill="#2a46c6"/><path d="M2.5 9.5 L9 13.4 L16.4 10.2 M5.8 6.9 L5.7 16.1 M12.9 7.3 L12.6 16.4 M6.4 3.7 L12.9 7.3 M13.4 4.1 L5.8 6.9" fill="none" stroke="#1a2a80" stroke-width="0.7"/><path d="M10.3 2.3 L16.6 5.9 L16.2 14.6 L8.8 18.3 L2.5 13.9 V5.1Z M2.5 5.1 L9.2 8.7 L16.6 5.9 M9.2 8.7 L8.8 18.3" fill="none" stroke="#0c1238" stroke-width="1.1" stroke-linejoin="round"/><linearGradient id="gRC" x1="0" y1="0" x2="0.8" y2="1"><stop offset="0" stop-color="#d3ddfc"/><stop offset="0.45" stop-color="#7d96f2"/><stop offset="1" stop-color="#2f4cd0"/></linearGradient><rect x="14.6" y="13.5" width="14.8" height="15.8" rx="5.2" fill="url(#gRC)" stroke="#0c1238" stroke-width="1.2"/><path d="M15 19.8 Q20 21.5 23.5 20.3 Q27 19 29 17 M19.5 14.2 Q18.6 21 20 28.8 M25.3 14.5 Q26 21 24.8 28.6 M16.5 16.5 Q21 18 26.5 15" fill="none" stroke="#1a2a70" stroke-width="0.8"/><path d="M28.5 12.8 Q31 6.3 25.5 4.4 Q22.8 3.7 20.6 5" fill="none" stroke="#111" stroke-width="1.4"/><path d="M18.3 6.2 L20.3 2.5 L22.6 7.2Z" fill="#111"/><path d="M3.7 17.6 Q1.2 23 5 26.5 Q7.8 28.4 10.6 27.4" fill="none" stroke="#111" stroke-width="1.4"/><path d="M13.4 26.2 L9.6 24 L11.2 29.4Z" fill="#111"/></svg>
<svg style="left:477.0px;top:185.0px" width="32" height="32" viewBox="0 0 32 32"><circle cx="14" cy="17.6" r="11" fill="url(#gW)" stroke="#111" stroke-width="1.9"/><clipPath id="cG"><circle cx="14" cy="17.6" r="10.2"/></clipPath><g clip-path="url(#cG)" fill="none" stroke="#3a3a3e" stroke-width="1.15" opacity="0.85"><path d="M7.4 5 Q6 17 7.8 30 M12.5 5 V30 M17.3 5 Q18 17 17.1 30 M22.1 5 Q23.5 17 21.6 30 M2 11.2 Q14 12.4 26 11.2 M2 16.3 H26 M2 21.3 Q14 22 26 21.3 M2 26.2 Q14 27.5 26 26.2"/></g><path d="M11.4 9.8 L17.3 3.1 L24 2.2 L27.7 4.2 V7.6 L24 9.4 L20.5 12 L16.5 10.5Z" fill="#fff" stroke="#111" stroke-width="1.1" stroke-linejoin="round"/><path d="M12.8 9.8 l4.2 -4.6 M14.6 10.3 l4.2 -4.6 M16.4 10.8 l4.2 -4.6 M18.3 11.2 l3.6 -4 M20 11.6 l2.6 -3" stroke="#111" stroke-width="0.7"/><rect x="27.7" y="2.2" width="2.6" height="7.8" fill="#111"/></svg>
<svg style="left:512.0px;top:185.0px" width="32" height="32" viewBox="0 0 32 32"><clipPath id="cF"><circle cx="16" cy="16" r="10.4"/></clipPath><g clip-path="url(#cF)"><rect x="4" y="4" width="24" height="24" fill="#d4d4d7"/><rect x="10" y="6" width="7" height="11" fill="#fbfbfb"/><rect x="17" y="4" width="12" height="14" fill="#b4b4b8"/><rect x="17" y="18" width="6" height="10" fill="#77777b"/><rect x="23" y="18" width="6" height="10" fill="#5a5a5e"/><rect x="4" y="18" width="13" height="10" fill="#bdbdc1"/><rect x="20" y="4" width="9" height="6" fill="#9a9a9e"/></g><circle cx="16" cy="16" r="10.6" fill="none" stroke="#111" stroke-width="1.7"/></svg>
<svg style="left:547.0px;top:185.0px" width="32" height="32" viewBox="0 0 32 32"><radialGradient id="gW2" cx="0.38" cy="0.3" r="0.8"><stop offset="0" stop-color="#fff"/><stop offset="0.4" stop-color="#d6d6da"/><stop offset="1" stop-color="#6e6e76"/></radialGradient><circle cx="16" cy="16" r="11.2" fill="url(#gW2)" stroke="#ffe600" stroke-width="2.7"/><path d="M6 20 Q16 23 26 20 M14.8 5.5 Q12.5 16 14.8 26.5" fill="none" stroke="#f5b72a" stroke-width="1.2"/></svg>
<svg style="left:582.0px;top:185.0px" width="32" height="32" viewBox="0 0 32 32"><path d="M16 16.5 V6 A10.5 10.5 0 0 0 5.5 16.5Z" fill="url(#gBl2)"/><path d="M16 16.5 V6 A10.5 10.5 0 0 1 26.5 16.5Z" fill="url(#gGr)"/><path d="M16 16.5 H5.5 A10.5 10.5 0 0 0 16 27Z" fill="#f3f3f6"/><path d="M16 16.5 H26.5 A10.5 10.5 0 0 1 16 27Z" fill="#e8501c"/><path d="M16 16.5 H22 L16 24Z" fill="#ff7a10"/><ellipse cx="11" cy="10.5" rx="1.8" ry="1.1" transform="rotate(-40 11 10.5)" fill="#fff"/><circle cx="16" cy="16.5" r="10.5" fill="none" stroke="#111" stroke-width="1.4"/><path d="M16 2.5 V30 M2.5 16.5 H30" stroke="#111" stroke-width="1.6"/></svg>
<svg style="left:617.0px;top:185.0px" width="32" height="32" viewBox="0 0 32 32"><linearGradient id="gCam" x1="0" y1="0" x2="1" y2="0.3"><stop offset="0" stop-color="#ffffff"/><stop offset="0.55" stop-color="#f2f2f4"/><stop offset="1" stop-color="#8e8e93"/></linearGradient><path d="M6.4 10.2 Q8.5 6.8 13.1 6.3 Q17 6.3 19.8 7.6 L22.8 7 Q26.3 7.6 27.6 10.2 Q28.8 13 28.6 15.7 Q28.4 18.8 26.9 20.9 Q25.2 23 22.8 23.5 Q20.5 23.3 18.7 22 L12 25.5 L6 20Z" fill="url(#gCam)" stroke="#111" stroke-width="1.4" stroke-linejoin="round"/><path d="M7.2 14.5 L15.5 11 Q19.5 13.5 19.2 19.5 L12.8 24.5Z" fill="#5f7fe2"/><path d="M9 13.8 L15.5 11 Q17 11.8 17.8 13.2 L10.5 16.5Z" fill="#9db3f2"/><ellipse cx="9.8" cy="19.8" rx="4.7" ry="5.7" transform="rotate(-22 9.8 19.8)" fill="#4a66d8" stroke="#0a1040" stroke-width="1.5"/><ellipse cx="9.9" cy="20" rx="2.7" ry="3.6" transform="rotate(-22 9.9 20)" fill="#1c1c22"/><path d="M6.6 10.6 Q4.8 14 5.2 18.5" fill="none" stroke="#111" stroke-width="1.3"/><circle cx="19.3" cy="10.3" r="1.7" fill="#1a10f0"/></svg>
<svg style="left:652.0px;top:185.0px" width="32" height="32" viewBox="0 0 32 32"><rect x="7.9" y="1.8" width="17.1" height="28.1" fill="#f1f2f7"/><linearGradient id="gCR" x1="0" y1="0" x2="0" y2="1"><stop offset="0" stop-color="#f4f6fc"/><stop offset="0.5" stop-color="#d3dbf2"/><stop offset="1" stop-color="#8c95b2"/></linearGradient><path d="M18.7 8.7 H25.5 Q29.2 9.5 29.2 15.7 Q29.2 22 25.5 22.8 H18.7Z" fill="url(#gCR)"/><rect x="7" y="8.7" width="11.7" height="14.1" fill="url(#gCyl)"/><ellipse cx="6.8" cy="15.7" rx="3.5" ry="7" fill="#dde5fb" stroke="#111" stroke-width="1.1"/><path d="M6.5 8.6 H16.8 M6.5 22.9 H18.8" stroke="#111" stroke-width="1.2"/><path d="M7.9 2.5 L11.6 8.1 M23.1 5.3 L18.7 10.9 M11.2 23.2 L9.2 26.5 M19.4 20.9 L24.3 28.8" stroke="#111" stroke-width="1.1"/><rect x="21.5" y="2.2" width="3.2" height="3.2" fill="#555" stroke="#111" stroke-width="0.9"/><rect x="7.2" y="26.4" width="3.2" height="3.2" fill="#555" stroke="#111" stroke-width="0.9"/></svg>
<svg style="left:687.0px;top:185.0px" width="32" height="32" viewBox="0 0 32 32"><rect x="7.9" y="1.8" width="17.1" height="28.1" fill="#f1f2f7"/><linearGradient id="gCR" x1="0" y1="0" x2="0" y2="1"><stop offset="0" stop-color="#f4f6fc"/><stop offset="0.5" stop-color="#d3dbf2"/><stop offset="1" stop-color="#8c95b2"/></linearGradient><path d="M18.7 8.7 H25.5 Q29.2 9.5 29.2 15.7 Q29.2 22 25.5 22.8 H18.7Z" fill="url(#gCR)"/><rect x="7" y="8.7" width="11.7" height="14.1" fill="url(#gCyl)"/><ellipse cx="6.8" cy="15.7" rx="3.5" ry="7" fill="#dde5fb" stroke="#111" stroke-width="1.1"/><path d="M6.5 8.6 H16.8 M6.5 22.9 H18.8" stroke="#111" stroke-width="1.2"/><path d="M7.9 2.5 L11.6 8.1 M23.1 5.3 L18.7 10.9 M11.2 23.2 L9.2 26.5 M19.4 20.9 L24.3 28.8" stroke="#111" stroke-width="1.1"/><rect x="21.5" y="2.2" width="3.2" height="3.2" fill="#555" stroke="#111" stroke-width="0.9"/><rect x="7.2" y="26.4" width="3.2" height="3.2" fill="#555" stroke="#111" stroke-width="0.9"/><path d="M8.8 7.2 L25.6 24.6 M25.6 7.2 L8.8 24.6" stroke="#ff0000" stroke-width="3.2"/></svg>
<svg style="left:722.0px;top:185.0px" width="32" height="32" viewBox="0 0 32 32"><rect x="2" y="2.5" width="28" height="23.5" fill="#050505"/><rect x="4.8" y="5" width="22.4" height="17.6" fill="url(#gMon)"/><path d="M12 26 H20 L22 29.5 H10Z" fill="#050505"/></svg>
<svg style="left:757.0px;top:185.0px" width="32" height="32" viewBox="0 0 32 32"><circle cx="10" cy="10.5" r="8" fill="none" stroke="#111" stroke-width="1.2"/><path d="M11 15.5 L20.5 11 L29.5 14 V25 L22.5 30 L11.5 26.5Z" fill="#f4f4f6"/><path d="M11 15.5 L20.5 11 L29.5 14 V25 L22.5 30 L11.5 26.5Z M11 15.5 L22 18.5 L29.5 14 M22 18.5 L22.5 30" fill="none" stroke="#111" stroke-width="1.5" stroke-linejoin="round"/></svg>
<svg style="left:792.0px;top:185.0px" width="32" height="32" viewBox="0 0 32 32"><path d="M16.5 6 L24 2.5 L30.5 5.5 V15 L24 18.5 L17 15.5Z" fill="#6d6d70"/><path d="M16.5 6 L24 2.5 L30.5 5.5 L23 9.2Z" fill="#fdfdfd"/><path d="M16.5 6 L23 9.2 L24 18.5 L17 15.5Z" fill="#d9d9dc"/><path d="M16.5 6 L24 2.5 L30.5 5.5 V15 L24 18.5 L17 15.5Z" fill="none" stroke="#111" stroke-width="1.3" stroke-linejoin="round"/><path d="M3.5 15.5 L10.5 12.5 L17.5 16.5 L18.5 26 L8.5 29.5 L4 25.5Z" fill="#18c8d8"/><path d="M3.5 15.5 L10.5 12.5 L17.5 16.5 L9 20Z" fill="#10e020"/><path d="M3.5 15.5 L9 20 L8.5 29.5 L4 25.5Z" fill="#f01010"/><path d="M3.5 15.5 L10.5 12.5 L17.5 16.5 L18.5 26 L8.5 29.5 L4 25.5Z" fill="none" stroke="#111" stroke-width="1.4" stroke-linejoin="round"/><path d="M13 18 L20 12.5" stroke="#fff" stroke-width="2"/><path d="M21.8 10.8 L17.8 11.8 L20.6 14.8Z" fill="#fff"/></svg>
<svg style="left:827.0px;top:185.0px" width="32" height="32" viewBox="0 0 32 32"><clipPath id="cH"><rect x="2.8" y="2.8" width="26.4" height="26.4" rx="6"/></clipPath><g clip-path="url(#cH)"><rect x="2" y="2" width="28" height="28" fill="#5b7cf0"/><path d="M2 2 H16 Q17.5 8 17 16 H2Z" fill="#ff0000"/><path d="M16 2 H30 V15.5 Q24 17.5 17 16 Q17.5 8 16 2Z" fill="#ffae00"/><path d="M2 9.5 H30 M2 16.5 H30 M2 23 H30 M9 2 V30 M16.2 2 V30 M23 2 V30" stroke="#00000055" stroke-width="1"/></g><rect x="2.8" y="2.8" width="26.4" height="26.4" rx="6" fill="none" stroke="#15203a" stroke-width="1.6"/><circle cx="19" cy="13" r="2.3" fill="#fff" stroke="#222" stroke-width="0.8"/></svg>
<svg style="left:1.0px;top:235.8px" width="36" height="36" viewBox="0 0 36 36"><path d="M12.6 7.8 V24.8 L16.5 20.9 L20 27.2 L22.6 25.9 L19 19.5 L24.6 19.3Z" fill="#fff" stroke="#222" stroke-width="1.3" stroke-linejoin="miter"/></svg>
<svg style="left:36.0px;top:235.8px" width="36" height="36" viewBox="0 0 36 36"><circle cx="17.4" cy="17.2" r="2.7" fill="#fff" stroke="#111" stroke-width="1.3"/><path d="M36.2 28 V36 H28.2Z" fill="#7d7d80"/><path d="M36.2 28 L28.2 36" stroke="#a5a5a8" stroke-width="0.8"/></svg>
<svg style="left:71.0px;top:235.8px" width="36" height="36" viewBox="0 0 36 36"><path d="M9.3 26.8 L15.5 10.2 L26.6 23.1" fill="none" stroke="#111" stroke-width="1.2"/><rect x="7.6" y="25.1" width="3.5" height="3.5" fill="#fff" stroke="#111" stroke-width="1.2"/><rect x="13.8" y="8.4" width="3.5" height="3.5" fill="#fff" stroke="#111" stroke-width="1.2"/><rect x="24.9" y="21.4" width="3.5" height="3.5" fill="#fff" stroke="#111" stroke-width="1.2"/><path d="M36.2 28 V36 H28.2Z" fill="#7d7d80"/><path d="M36.2 28 L28.2 36" stroke="#a5a5a8" stroke-width="0.8"/></svg>
<svg style="left:106.0px;top:235.8px" width="36" height="36" viewBox="0 0 36 36"><path d="M7.9 10.7 C17 7.5 26.5 8.5 26.6 17.5 C26.6 25.5 17 28 7.9 25.4" fill="none" stroke="#111" stroke-width="1.2"/><rect x="6.2" y="8.9" width="3.5" height="3.5" fill="#fff" stroke="#111" stroke-width="1.2"/><rect x="23.8" y="4.7" width="3.5" height="3.5" fill="#fff" stroke="#111" stroke-width="1.2"/><rect x="6.2" y="23.6" width="3.5" height="3.5" fill="#fff" stroke="#111" stroke-width="1.2"/><rect x="26.1" y="26.4" width="3.5" height="3.5" fill="#fff" stroke="#111" stroke-width="1.2"/><path d="M36.2 28 V36 H28.2Z" fill="#7d7d80"/><path d="M36.2 28 L28.2 36" stroke="#a5a5a8" stroke-width="0.8"/></svg>
<svg style="left:1.0px;top:270.8px" width="36" height="36" viewBox="0 0 36 36"><circle cx="17.2" cy="17" r="11.5" fill="none" stroke="#111" stroke-width="1.3"/><path d="M17.9 16.8 L25.6 9.4" stroke="#333" stroke-width="0.8"/><rect x="16.1" y="15.1" width="3.5" height="3.5" fill="#fff" stroke="#111" stroke-width="1.2"/><rect x="23.9" y="7.7" width="3.5" height="3.5" fill="#fff" stroke="#111" stroke-width="1.2"/><path d="M36.2 28 V36 H28.2Z" fill="#7d7d80"/><path d="M36.2 28 L28.2 36" stroke="#a5a5a8" stroke-width="0.8"/></svg>
<svg style="left:36.0px;top:270.8px" width="36" height="36" viewBox="0 0 36 36"><ellipse cx="17.9" cy="19.2" rx="11.9" ry="8.3" fill="none" stroke="#111" stroke-width="1.3"/><path d="M17.8 10.4 V19.5 H29.6" fill="none" stroke="#111" stroke-width="0.8"/><rect x="16.1" y="17.8" width="3.5" height="3.5" fill="#fff" stroke="#111" stroke-width="1.2"/><rect x="16.1" y="8.7" width="3.5" height="3.5" fill="#fff" stroke="#111" stroke-width="1.2"/><rect x="27.9" y="17.6" width="3.5" height="3.5" fill="#fff" stroke="#111" stroke-width="1.2"/><path d="M36.2 28 V36 H28.2Z" fill="#7d7d80"/><path d="M36.2 28 L28.2 36" stroke="#a5a5a8" stroke-width="0.8"/></svg>
<svg style="left:71.0px;top:270.8px" width="36" height="36" viewBox="0 0 36 36"><path d="M9.3 8.1 Q20.5 9.5 26.6 18.1" fill="none" stroke="#111" stroke-width="1.4"/><path d="M9.3 8.1 V28 L26.6 18.1" fill="none" stroke="#111" stroke-width="0.8"/><rect x="7.6" y="6.3" width="3.5" height="3.5" fill="#fff" stroke="#111" stroke-width="1.2"/><rect x="24.9" y="16.4" width="3.5" height="3.5" fill="#fff" stroke="#111" stroke-width="1.2"/><rect x="7.6" y="26.2" width="3.5" height="3.5" fill="#fff" stroke="#111" stroke-width="1.2"/><path d="M36.2 28 V36 H28.2Z" fill="#7d7d80"/><path d="M36.2 28 L28.2 36" stroke="#a5a5a8" stroke-width="0.8"/></svg>
<svg style="left:106.0px;top:270.8px" width="36" height="36" viewBox="0 0 36 36"><rect x="7.9" y="11.6" width="20.3" height="13" fill="none" stroke="#111" stroke-width="1.5"/><rect x="6.2" y="22.9" width="3.5" height="3.5" fill="#fff" stroke="#111" stroke-width="1.2"/><rect x="26.2" y="10.2" width="3.5" height="3.5" fill="#fff" stroke="#111" stroke-width="1.2"/><path d="M36.2 28 V36 H28.2Z" fill="#7d7d80"/><path d="M36.2 28 L28.2 36" stroke="#a5a5a8" stroke-width="0.8"/></svg>
<svg style="left:1.0px;top:305.8px" width="36" height="36" viewBox="0 0 36 36"><path d="M7.1 17.1 L12.2 8.1 H22.3 L27.4 17.1 L22.3 26.3 H12.2Z" fill="none" stroke="#111" stroke-width="1.2"/><path d="M17.9 16.7 H26.8" stroke="#333" stroke-width="0.8"/><rect x="16.1" y="14.9" width="3.5" height="3.5" fill="#fff" stroke="#111" stroke-width="1.2"/><rect x="25.1" y="14.9" width="3.5" height="3.5" fill="#fff" stroke="#111" stroke-width="1.2"/><path d="M36.2 28 V36 H28.2Z" fill="#7d7d80"/><path d="M36.2 28 L28.2 36" stroke="#a5a5a8" stroke-width="0.8"/></svg>
<svg style="left:36.0px;top:305.8px" width="36" height="36" viewBox="0 0 36 36"><path d="M10 7.4 H28.4 V25" fill="none" stroke="#8d8d90" stroke-width="0.8"/><path d="M8.1 8 H14 Q27.8 8 27.9 24" fill="none" stroke="#111" stroke-width="2"/><rect x="6.3" y="6.2" width="3.5" height="3.5" fill="#fff" stroke="#111" stroke-width="1.2"/><rect x="26.2" y="25.1" width="3.5" height="3.5" fill="#fff" stroke="#111" stroke-width="1.2"/><path d="M36.2 28 V36 H28.2Z" fill="#7d7d80"/><path d="M36.2 28 L28.2 36" stroke="#a5a5a8" stroke-width="0.8"/></svg>
<svg style="left:71.0px;top:305.8px" width="36" height="36" viewBox="0 0 36 36"><path d="M13.2 7.8 Q21 9.5 28.3 7.8 Q24 18 21.6 27.9 Q15 23 7.7 21.7 Q11.5 15 13.2 7.8Z" fill="url(#gBl)" stroke="#111" stroke-width="1.1"/><path d="M20.8 8.8 Q16.5 17 14.5 24.2 M10.8 14.8 Q18 17.5 24.8 17.2" fill="none" stroke="#111" stroke-width="1"/><rect x="11.4" y="6.0" width="3.5" height="3.5" fill="#fff" stroke="#111" stroke-width="1.2"/><rect x="26.6" y="6.0" width="3.5" height="3.5" fill="#fff" stroke="#111" stroke-width="1.2"/><rect x="6.0" y="19.9" width="3.5" height="3.5" fill="#fff" stroke="#111" stroke-width="1.2"/><rect x="19.9" y="26.1" width="3.5" height="3.5" fill="#fff" stroke="#111" stroke-width="1.2"/><path d="M36.2 28 V36 H28.2Z" fill="#7d7d80"/><path d="M36.2 28 L28.2 36" stroke="#a5a5a8" stroke-width="0.8"/></svg>
<svg style="left:106.0px;top:305.8px" width="36" height="36" viewBox="0 0 36 36"><path d="M6.1 12.4 L14.6 6.6 L21.5 9 L13.5 15.5Z" fill="#fff"/><path d="M13.5 15.5 L21.5 9 Q27.5 11 27.8 17 L18.5 22.5 Q18.5 18 13.5 15.5Z" fill="url(#gBl2)"/><path d="M27.8 17 V23.3 L18.5 29.5 V22.5Z" fill="#fff"/><path d="M6.1 12.4 L14.6 6.6 Q27.5 8 27.8 17 V23.3 L18.5 29.5 V22.5 Q18.5 16 6.1 12.4Z" fill="none" stroke="#111" stroke-width="1.2" stroke-linejoin="round"/><path d="M36.2 28 V36 H28.2Z" fill="#7d7d80"/><path d="M36.2 28 L28.2 36" stroke="#a5a5a8" stroke-width="0.8"/></svg>
<svg style="left:1.0px;top:340.8px" width="36" height="36" viewBox="0 0 36 36"><path d="M15.7 5.7 L27.7 9.2 L19.6 15.8 L7.1 13.1Z" fill="#b9c6fa"/><path d="M7.1 13.1 L19.6 15.8 V28.6 L7.1 24.7Z" fill="#5d7cec"/><path d="M27.7 9.2 L19.6 15.8 V28.6 L27.7 22.4Z" fill="#3a52c4"/><path d="M15.7 5.7 L27.7 9.2 V22.4 L19.6 28.6 L7.1 24.7 V13.1Z" fill="none" stroke="#111" stroke-width="1.2" stroke-linejoin="round"/><path d="M36.2 28 V36 H28.2Z" fill="#7d7d80"/><path d="M36.2 28 L28.2 36" stroke="#a5a5a8" stroke-width="0.8"/></svg>
<svg style="left:36.0px;top:340.8px" width="36" height="36" viewBox="0 0 36 36"><circle cx="13.3" cy="22.4" r="8.6" fill="url(#gBl2)" stroke="#111" stroke-width="1.2"/><path d="M4.700000000000001 23.9 Q13.3 26.4 21.9 23.9 M11.8 13.799999999999999 Q9.3 22.4 12.3 31.0" fill="none" stroke="#1a2560" stroke-width="0.9"/><circle cx="22.6" cy="13.1" r="8.4" fill="url(#gBl2)" stroke="#111" stroke-width="1.2"/><path d="M14.200000000000001 14.6 Q22.6 17.1 31.0 14.6 M21.1 4.699999999999999 Q18.6 13.1 21.6 21.5" fill="none" stroke="#1a2560" stroke-width="0.9"/><path d="M36.2 28 V36 H28.2Z" fill="#7d7d80"/><path d="M36.2 28 L28.2 36" stroke="#a5a5a8" stroke-width="0.8"/></svg>
<svg style="left:71.0px;top:340.8px" width="36" height="36" viewBox="0 0 36 36"><ellipse cx="18.2" cy="7.8" rx="7.1" ry="3.2" fill="none" stroke="#111" stroke-width="1.1"/><path d="M4.6 15.2 Q18 22.5 31.4 15.2 V26.5 Q18 33.5 4.6 26.5Z" fill="url(#gBl2)" stroke="#111" stroke-width="1.1"/><path d="M4.6 15.2 Q18 22.5 31.4 15.2 V26.5 Q18 33.5 4.6 26.5Z" fill="#3f5de0" opacity="0.55"/><ellipse cx="18.2" cy="24.8" rx="6.3" ry="2.9" fill="#8ea2f4" stroke="#fff" stroke-width="1.6"/><path d="M36.2 28 V36 H28.2Z" fill="#7d7d80"/><path d="M36.2 28 L28.2 36" stroke="#a5a5a8" stroke-width="0.8"/></svg>
<svg style="left:106.0px;top:340.8px" width="36" height="36" viewBox="0 0 36 36"><path d="M16.6 6.5 Q24 11 31.3 11.5 Q24 19 19.3 29.4 Q13 24.5 4.9 24.7 Q12 16 16.6 6.5Z" fill="url(#gBl)" stroke="#111" stroke-width="1.1"/><path d="M21.5 8.8 Q15 17 9.5 24.3 M26.3 10.6 Q19 19 14.3 25.8 M12.8 13.5 Q20 16.5 27.3 16.8 M9 19 Q16.5 20.5 23 23" fill="none" stroke="#111" stroke-width="0.8"/><path d="M36.2 28 V36 H28.2Z" fill="#7d7d80"/><path d="M36.2 28 L28.2 36" stroke="#a5a5a8" stroke-width="0.8"/></svg>
<svg style="left:1.0px;top:375.8px" width="36" height="36" viewBox="0 0 36 36"><path transform="translate(6.8 5.2) scale(0.88) rotate(33 8.5 8.5)" d="M2 4 H6 Q4.8 0.6 8.5 0.6 Q12.2 0.6 11 4 H15 V8 Q18.4 6.8 18.4 10.5 Q18.4 14.2 15 13 V17 H11 Q12.2 13.8 8.5 13.8 Q4.8 13.8 6 17 H2 V13 Q-1.4 14.2 -1.4 10.5 Q-1.4 6.8 2 8Z" fill="#f5a510" stroke="#111" stroke-width="1.1" stroke-linejoin="round"/><path transform="translate(16.2 15.6) scale(0.88) rotate(33 8.5 8.5)" d="M2 4 H6 Q4.8 0.6 8.5 0.6 Q12.2 0.6 11 4 H15 V8 Q18.4 6.8 18.4 10.5 Q18.4 14.2 15 13 V17 H11 Q12.2 13.8 8.5 13.8 Q4.8 13.8 6 17 H2 V13 Q-1.4 14.2 -1.4 10.5 Q-1.4 6.8 2 8Z" fill="#fff" stroke="#111" stroke-width="1.1" stroke-linejoin="round"/><path d="M36.2 28 V36 H28.2Z" fill="#7d7d80"/><path d="M36.2 28 L28.2 36" stroke="#a5a5a8" stroke-width="0.8"/></svg>
<svg style="left:36.0px;top:375.8px" width="36" height="36" viewBox="0 0 36 36"><linearGradient id="gEx" x1="0" y1="1" x2="1" y2="0"><stop offset="0" stop-color="#ffc010"/><stop offset="0.5" stop-color="#ff8a10"/><stop offset="1" stop-color="#f03a08"/></linearGradient><path d="M4 31.4 V17.8 L9.4 7.4 L9.8 22.9 L26.8 6.6 L19.5 23.3 L31.5 24.8 L21 29.1 L23 31.4Z" fill="url(#gEx)"/><path d="M4 17.8 L9.4 7.4 L9.8 22.9 L26.8 6.6 L19.5 23.3 L31.5 24.8 L21 29.1 L23 31.4" fill="none" stroke="#111" stroke-width="1"/></svg>
<svg style="left:71.0px;top:375.8px" width="36" height="36" viewBox="0 0 36 36"><rect x="4.3" y="17.5" width="13.2" height="5.8" fill="#fff" stroke="#444" stroke-width="1.3"/><path d="M17.4 23.3 L21.6 19 L29.6 26.6 L24.6 31Z" fill="#fff" stroke="#444" stroke-width="1.2"/><path d="M16.7 7.2 H25.2 L17.4 23.6Z" fill="#14237c"/></svg>
<svg style="left:106.0px;top:375.8px" width="36" height="36" viewBox="0 0 36 36"><rect x="5.3" y="19.8" width="23.7" height="6.6" fill="#fff" stroke="#444" stroke-width="1.3"/><path d="M18.1 9.2 H26.3 L18.5 26.8Z" fill="#14237c"/></svg>
<svg style="left:1.0px;top:410.8px" width="36" height="36" viewBox="0 0 36 36"><g fill="#050505"><circle cx="17.9" cy="13.4" r="6.3"/><circle cx="13.6" cy="21.3" r="6.3"/><circle cx="23" cy="21.3" r="6.3"/></g><circle cx="17.9" cy="13.4" r="4.1" fill="#6786f4"/><circle cx="13.6" cy="21.4" r="4.1" fill="#fff"/><circle cx="23" cy="21.4" r="4.1" fill="#15257e"/><path d="M36.2 28 V36 H28.2Z" fill="#7d7d80"/><path d="M36.2 28 L28.2 36" stroke="#a5a5a8" stroke-width="0.8"/></svg>
<svg style="left:36.0px;top:410.8px" width="36" height="36" viewBox="0 0 36 36"><circle cx="17.9" cy="12.7" r="4.4" fill="#6786f4" stroke="#111" stroke-width="1"/><circle cx="11.5" cy="22.8" r="4.3" fill="#fff" stroke="#111" stroke-width="1.2"/><circle cx="24.4" cy="22.8" r="4.6" fill="#15257e" stroke="#0a0f40" stroke-width="0.8"/></svg>
<svg style="left:71.0px;top:410.8px" width="36" height="36" viewBox="0 0 36 36"><path d="M5.4 12.2 Q21 9 24 30.2" fill="none" stroke="#111" stroke-width="1.7"/><rect x="9.9" y="9.9" width="3.3" height="3.3" fill="#fff" stroke="#111" stroke-width="1.2"/><rect x="22.5" y="23.0" width="3.3" height="3.3" fill="#fff" stroke="#111" stroke-width="1.2"/></svg>
<svg style="left:106.0px;top:410.8px" width="36" height="36" viewBox="0 0 36 36"><path d="M5 7.2 H14 M16.5 8.5 L29 21 M29.4 24 V32" fill="none" stroke="#111" stroke-width="1" stroke-dasharray="1.3 1.3"/><path d="M4.9 12 Q22.5 10 24 30.2" fill="none" stroke="#111" stroke-width="2"/><rect x="12.5" y="5.2" width="3.3" height="3.3" fill="#fff" stroke="#111" stroke-width="1.2"/><rect x="27.8" y="20.0" width="3.3" height="3.3" fill="#fff" stroke="#111" stroke-width="1.2"/><path d="M36.2 28 V36 H28.2Z" fill="#7d7d80"/><path d="M36.2 28 L28.2 36" stroke="#a5a5a8" stroke-width="0.8"/></svg>
<svg style="left:1.0px;top:445.8px" width="36" height="36" viewBox="0 0 36 36"><path d="M6.8 6.8 L9.5 4.6 L27.8 9.6 L28 15.8 L25.2 18 L24 14.6 L21.5 14 L21.8 26.5 L24.5 28.3 L22.5 31 L11.5 28 L12.5 25.5 L15 25.5 L14.6 12.2 L10.5 11.2 L8.2 13.5 L6.8 12.5Z" fill="#5b7cf0" stroke="#0a1560" stroke-width="1.1" stroke-linejoin="round"/><path d="M9.5 4.6 L27.8 9.6 L26 11.2 L8.3 6.3Z M17.5 13 L21.5 14 L21.8 26.5 L18.3 27.5Z" fill="#a9baf9"/></svg>
<svg style="left:36.0px;top:445.8px" width="36" height="36" viewBox="0 0 36 36"><rect x="7.1" y="20.9" width="7.7" height="7.8" fill="url(#gGr)" stroke="#111" stroke-width="1.3"/><rect x="22.3" y="5.8" width="8" height="8" fill="url(#gBl2)" stroke="#111" stroke-width="1.3"/><path d="M14.4 21.3 L21.2 14.9 M17.5 14.6 L21.6 14.5 L21.3 18.6" fill="none" stroke="#111" stroke-width="1.2"/><path d="M36.2 28 V36 H28.2Z" fill="#7d7d80"/><path d="M36.2 28 L28.2 36" stroke="#a5a5a8" stroke-width="0.8"/></svg>
<svg style="left:71.0px;top:445.8px" width="36" height="36" viewBox="0 0 36 36"><rect x="7.2" y="5.8" width="7.8" height="7.8" fill="url(#gBl2)" stroke="#111" stroke-width="1.3"/><rect x="7.2" y="20.9" width="7.8" height="7.8" fill="url(#gGr)" stroke="#111" stroke-width="1.3"/><rect x="22.5" y="9.7" width="7.4" height="7.4" fill="url(#gBl2)" stroke="#111" stroke-width="1.3"/><rect x="17.4" y="13.6" width="7.6" height="7.6" fill="url(#gBl2)" stroke="#111" stroke-width="1.3"/><rect x="22.2" y="23.4" width="8" height="8" fill="url(#gBl2)" stroke="#111" stroke-width="1.3"/></svg>
<svg style="left:106.0px;top:445.8px" width="36" height="36" viewBox="0 0 36 36"><rect x="4.6" y="5.8" width="6.7" height="17.5" fill="url(#gGr)" stroke="#111" stroke-width="1.3"/><path d="M26.3 12 L31.3 16.7 L18.5 29.5 L13.9 24.8Z" fill="url(#gBl2)" stroke="#111" stroke-width="1.3"/><path d="M11.5 7.4 Q19 7.5 22.6 13.4 M22.8 9.6 L22.9 13.8 L18.8 13.6" fill="none" stroke="#111" stroke-width="1"/></svg>
<svg style="left:1.0px;top:480.8px" width="36" height="36" viewBox="0 0 36 36"><path d="M16.5 5.7 L28.9 9.6 L20.3 16.2 L7.1 13.1Z" fill="#b9c6fa"/><path d="M7.1 13.1 L20.3 16.2 V29.8 L7.1 25.9Z" fill="#5d7cec"/><path d="M28.9 9.6 L20.3 16.2 V29.8 L28.9 22.8Z" fill="#3a52c4"/><path d="M14.9 21 L21 22.5 L24.6 19.5 V26 L20 29.6 L14.9 28Z" fill="#fff"/><path d="M21 22.5 L24.6 19.5 V26 L21 28.8Z" fill="#b8b8bc"/><path d="M14.9 28 V21 L21 22.5 L24.6 19.5" fill="none" stroke="#111" stroke-width="0.9"/><path d="M16.5 5.7 L28.9 9.6 V22.8 L19.9 29.8 L7.1 25.9 V13.1Z" fill="none" stroke="#111" stroke-width="1.3" stroke-linejoin="round"/><path d="M36.2 28 V36 H28.2Z" fill="#7d7d80"/><path d="M36.2 28 L28.2 36" stroke="#a5a5a8" stroke-width="0.8"/></svg>
<svg style="left:36.0px;top:480.8px" width="36" height="36" viewBox="0 0 36 36"><path d="M8.6 19.7 H31.5 L26.1 26.3 H4.3Z" fill="#5b7cf0"/><path d="M8.6 19.7 L4.3 26.3 H26.1 L31.5 19.7" fill="none" stroke="#111" stroke-width="1.6"/><path d="M8.6 19.7 H31.5" stroke="#111" stroke-width="1.6" stroke-dasharray="3 2.2"/><g stroke="#fff" stroke-width="1.7" fill="#fff"><path d="M10.5 23 V10 M17.9 23 V10 M25.3 23 V10"/><path d="M10.5 6.8 L8 11 H13Z M17.9 6.8 L15.4 11 H20.4Z M25.3 6.8 L22.8 11 H27.8Z" stroke="none"/></g><path d="M36.2 28 V36 H28.2Z" fill="#7d7d80"/><path d="M36.2 28 L28.2 36" stroke="#a5a5a8" stroke-width="0.8"/></svg>
<svg style="left:71.0px;top:480.8px" width="36" height="36" viewBox="0 0 36 36"><rect x="5.8" y="5.8" width="5.5" height="5.5" fill="url(#gBl2)" stroke="#222" stroke-width="1.3"/><rect x="5.8" y="14.3" width="5.5" height="5.5" fill="url(#gBl2)" stroke="#222" stroke-width="1.3"/><rect x="5.8" y="23.1" width="5.5" height="5.5" fill="#fff" stroke="#222" stroke-width="1.3"/><rect x="14.4" y="5.8" width="5.5" height="5.5" fill="url(#gBl2)" stroke="#222" stroke-width="1.3"/><rect x="14.4" y="14.3" width="5.5" height="5.5" fill="url(#gBl2)" stroke="#222" stroke-width="1.3"/><rect x="14.4" y="23.1" width="5.5" height="5.5" fill="url(#gBl2)" stroke="#222" stroke-width="1.3"/><rect x="23.2" y="5.8" width="5.5" height="5.5" fill="url(#gBl2)" stroke="#222" stroke-width="1.3"/><rect x="23.2" y="14.3" width="5.5" height="5.5" fill="url(#gBl2)" stroke="#222" stroke-width="1.3"/><rect x="23.2" y="23.1" width="5.5" height="5.5" fill="url(#gBl2)" stroke="#222" stroke-width="1.3"/><path d="M36.2 28 V36 H28.2Z" fill="#7d7d80"/><path d="M36.2 28 L28.2 36" stroke="#a5a5a8" stroke-width="0.8"/></svg>
<svg style="left:106.0px;top:480.8px" width="36" height="36" viewBox="0 0 36 36"><rect x="12.1" y="6.1" width="11.8" height="6.2" fill="url(#gGr)" stroke="#222" stroke-width="1.3"/><rect x="14.6" y="14.7" width="6.6" height="5" fill="#d8d8da" stroke="#222" stroke-width="1.3"/><rect x="13.1" y="22.4" width="9.7" height="7.4" fill="url(#gGr)" stroke="#222" stroke-width="1.3"/><path d="M18 4.2 V31.7" stroke="#e01818" stroke-width="1.6"/><path d="M36.2 28 V36 H28.2Z" fill="#7d7d80"/><path d="M36.2 28 L28.2 36" stroke="#a5a5a8" stroke-width="0.8"/></svg>
<svg style="left:1.0px;top:515.8px" width="36" height="36" viewBox="0 0 36 36"><path d="M16.8 5.8 L22.5 8.5 L20 24 L16 22Z" fill="#fff" stroke="#111" stroke-width="1"/><path d="M7.1 11.5 L11.8 8.3 L17 10.8 L14.5 27.2 L7.1 24.5Z" fill="url(#gGr)" stroke="#111" stroke-width="1.2" stroke-linejoin="round"/><path d="M7.1 11.5 L11.8 8.3 L17 10.8 L12 13.5Z" fill="#fff"/><path d="M21.5 10.3 L29.3 12.4 L29 16 L21.6 30.3 L13.6 26.6 L14 24Z" fill="url(#gBl)" stroke="#111" stroke-width="1.2" stroke-linejoin="round"/><path d="M21.5 10.3 L29.3 12.4 L21.5 29.5" fill="none" stroke="#111" stroke-width="0" /><path d="M36.2 28 V36 H28.2Z" fill="#7d7d80"/><path d="M36.2 28 L28.2 36" stroke="#a5a5a8" stroke-width="0.8"/></svg>
<svg style="left:36.0px;top:515.8px" width="36" height="36" viewBox="0 0 36 36"><rect x="12.5" y="4.7" width="4.3" height="26.7" fill="#6a88f2" stroke="#111" stroke-width="1.2"/><circle cx="5.5" cy="11.7" r="2.6" fill="#111"/><circle cx="23.2" cy="11.7" r="2.6" fill="#111"/><path d="M6 15.5 L13 16.5 M6.5 15.5 L8 22 L13 20.5 L11.5 31" fill="none" stroke="#111" stroke-width="2.8" stroke-linejoin="round"/><path d="M17 16.5 L23.5 16 L28.5 21.5 L26 24.5 L31.5 30.8" fill="none" stroke="#111" stroke-width="2.6" stroke-linejoin="round"/><path d="M32.5 32 L28.6 31.2 L31.6 28.2Z" fill="#111"/><path d="M36.2 28 V36 H28.2Z" fill="#7d7d80"/><path d="M36.2 28 L28.2 36" stroke="#a5a5a8" stroke-width="0.8"/></svg>
<svg style="left:71.0px;top:515.8px" width="36" height="36" viewBox="0 0 36 36"><path d="M5.6 20.4 Q8.2 18.6 10.2 19.8 Q11.6 22.2 12.2 24.6 Q18.5 12.5 30.2 6 Q30.9 6.4 30.2 7.3 Q19.5 17.5 12 30.2 Q10.8 30.8 10.2 29.8 Q8.5 24.5 5.6 20.4Z" fill="#050505"/><path d="M36.2 28 V36 H28.2Z" fill="#7d7d80"/><path d="M36.2 28 L28.2 36" stroke="#a5a5a8" stroke-width="0.8"/></svg>
<svg style="left:106.0px;top:515.8px" width="36" height="36" viewBox="0 0 36 36"><path d="M5.7 13.2 L12.3 8.5 L22 12.4 L15.8 17Z" fill="#f4f4f6"/><path d="M5.7 13.2 L15.8 17 V24.8 L5.7 22.5Z" fill="#d8d8db"/><path d="M22 12.4 L15.8 17 V24.8 L22 20Z" fill="#8a8a8e"/><path d="M5.7 13.2 L12.3 8.5 L22 12.4 V20 L15.8 24.8 L5.7 22.5Z" fill="none" stroke="#111" stroke-width="1.2" stroke-linejoin="round"/><path d="M23.2 9.7 L30.4 23.8 Q30 27.5 24 27.5 Q18 27.3 17.4 24 Z" fill="url(#gW)" stroke="#111" stroke-width="1.2" stroke-linejoin="round"/><path d="M36.2 28 V36 H28.2Z" fill="#7d7d80"/><path d="M36.2 28 L28.2 36" stroke="#a5a5a8" stroke-width="0.8"/></svg>
<svg style="left:1.0px;top:550.8px" width="36" height="36" viewBox="0 0 36 36"><path d="M17.6 14.6 L7.1 26.7 L19.6 31.3Z" fill="#f3c846"/><path d="M17.6 14.6 L27.7 24.3 L19.6 31.3Z" fill="#c79a32"/><path d="M17.6 14.6 L7.1 26.7 L19.6 31.3 L27.7 24.3Z" fill="none" stroke="#111" stroke-width="0.9" stroke-linejoin="round"/><path d="M14.5 11.5 L19.5 5.5 L25 4.6 L29.6 5.5 V10 L25.5 12.3 L21.5 13.5Z" fill="#fff" stroke="#111" stroke-width="1" stroke-linejoin="round"/><path d="M15.5 11.6 l4 -4.4 M17.2 12.2 l4 -4.4 M19 12.7 l4 -4.4 M20.8 13 l3.4 -3.8" stroke="#111" stroke-width="0.7"/><rect x="29.6" y="4.4" width="2.6" height="7.2" fill="#111"/><path d="M36.2 28 V36 H28.2Z" fill="#7d7d80"/><path d="M36.2 28 L28.2 36" stroke="#a5a5a8" stroke-width="0.8"/></svg>
<div style="left:1429.2px;top:255.2px;width:30.4px;height:30.4px;border-radius:50%;background:conic-gradient(#ff0000,#ff9000 10%,#ffff00 17%,#30ff00 28%,#00ff40 38%,#00ffe0 50%,#0060ff 60%,#1000ff 70%,#9000ff 80%,#ff00e0 90%,#ff0000);border:1.5px solid #151515"></div>
<div style="left:1436.8px;top:262.8px;width:15.2px;height:15.2px;border-radius:50%;background:#d3daf0"></div>
<svg style="left:1468.0px;top:254.0px" width="32" height="32" viewBox="0 0 32 32"><linearGradient id="gTo" x1="0" y1="0" x2="1" y2="1"><stop offset="0" stop-color="#e4e4e6"/><stop offset="0.45" stop-color="#a9a9ad"/><stop offset="1" stop-color="#55555a"/></linearGradient><path d="M12.7 1.9 Q16.5 2.5 17.9 5.7 Q17 8 14.8 9.8 Q12 12.5 12.7 15.3 Q13.8 19.5 17.5 20.2 Q22 20.5 26.5 16.4 Q29.8 18.5 29.6 22.9 Q29 26.5 26.5 28.1 Q22.5 30 18.2 29.8 Q12.5 29 8.6 25.7 Q3.5 22 2.4 16.7 Q2 12.5 3.7 9.1 Q5.5 5.5 8.6 3.6 Q10.5 2.2 12.7 1.9Z" fill="url(#gTo)" stroke="#111" stroke-width="1.2"/><path d="M11.8 4.4 Q5.6 8.5 5.9 15.5 Q7 23.5 16 26.4 Q23 27.6 28 24.6" fill="none" stroke="#fff" stroke-width="2.2" opacity="0.75"/><path d="M15.8 7.6 Q11.5 11 11.8 15.5 Q13 21 18 21.6 Q22.5 21.6 27 18.6" fill="none" stroke="#77777a" stroke-width="1.6" opacity="0.8"/><path d="M16.2 5.7 Q10.5 8.5 9.3 11.9 Q8.2 16 11.3 19.5 Q14.5 22.8 19.6 22.6 Q24 22.6 28.3 21.6" fill="none" stroke="#111" stroke-width="1"/></svg>
<svg style="left:1508.0px;top:254.0px" width="32" height="32" viewBox="0 0 32 32"><linearGradient id="gCy2" x1="0" y1="0" x2="1" y2="0"><stop offset="0" stop-color="#9fb4fa"/><stop offset="0.35" stop-color="#5b7cf0"/><stop offset="1" stop-color="#0d1e78"/></linearGradient><path d="M9.7 9 V26 Q9.7 30 19.8 30 Q30 30 30 26 V9Z" fill="url(#gCy2)" stroke="#111" stroke-width="1.2"/><ellipse cx="19.85" cy="9.2" rx="10.1" ry="4.2" fill="#b9c6fa" stroke="#111" stroke-width="1.1"/><path d="M1.7 3.5 H17 M1.7 5.5 H17 M1.7 8.5 H17 M1.7 10.5 H17 M1.7 13.5 H17" stroke="#111" stroke-width="1.1"/><path d="M1.7 3.5 H3.6 M1.7 5.5 H3.6 M1.7 8.5 H3.6 M1.7 10.5 H3.6 M1.7 13.5 H3.6" stroke="#b9b9bc" stroke-width="1.2"/></svg>
<svg style="left:12.0px;top:695.0px" width="24" height="24" viewBox="0 0 24 24"><circle cx="11.7" cy="12" r="8.6" fill="none" stroke="#77777a" stroke-width="0.9"/><path d="M12 12 H23" stroke="#111" stroke-width="1.1"/><rect x="9.6" y="9.8" width="4.4" height="4.4" fill="#fff" stroke="#111" stroke-width="1.4"/></svg>
<svg style="left:57.0px;top:695.0px" width="24" height="24" viewBox="0 0 24 24"><path d="M5.2 5.2 H18.4 L13.2 12 V18.6 Q11.8 20 10.4 18.6 V12Z" fill="#8d8d90" stroke="#444" stroke-width="0.9"/><ellipse cx="11.8" cy="5.4" rx="6.6" ry="1.4" fill="#c9c9cc" stroke="#444" stroke-width="0.7"/><path d="M3.2 17.6 V20.6 H6.2 M17.6 2.6 H20.8 V5.6" fill="none" stroke="#222" stroke-width="1"/></svg>
<svg style="left:127.30000000000001px;top:674.3px" width="16" height="16" viewBox="0 0 16 16"><g transform="translate(8 8)" fill="#c5c6cb"><rect x="-1.5" y="-7" width="3" height="14" transform="rotate(0)"/><rect x="-1.5" y="-7" width="3" height="14" transform="rotate(45)"/><rect x="-1.5" y="-7" width="3" height="14" transform="rotate(90)"/><rect x="-1.5" y="-7" width="3" height="14" transform="rotate(135)"/><circle r="5"/></g><circle cx="8" cy="8" r="2.2" fill="#eaebef"/></svg>
<svg style="left:2.0px;top:4.0px" width="20" height="20" viewBox="0 0 20 20"><rect x="0" y="0" width="20" height="20" fill="#050505"/><path d="M0 0 H5.4 L9.2 5.6 L11.8 9.7 L15.9 11 L20 10 V11.3 L12.4 19 L10.8 18.3 L0 10Z" fill="#fff"/><path d="M1.2 7.5 Q4 6 4.5 0.8 M4 10.8 L8.5 14 M6 9.5 L9.5 12.2 M14 12 L18.5 10.8" fill="none" stroke="#222" stroke-width="1"/><path d="M15.2 1.5 h2.6 v3 h-2.6z M14.8 4.8 h3.4 v3 h-3.4z" fill="none" stroke="#bdbdbd" stroke-width="1"/></svg>
<div class="t" style="left:29.50px;top:8.00px;font-size:14.5px;font-weight:400;color:#262626;letter-spacing:-0.078px;">TABLE CLOTH (14 MB) - Rhinoceros 8 Commercial - [Top]</div>
<div class="t" style="left:9.50px;top:33.00px;font-size:14.5px;font-weight:400;color:#262626;letter-spacing:-0.294px;">File</div>
<div class="t" style="left:50.70px;top:33.00px;font-size:14.5px;font-weight:400;color:#262626;letter-spacing:0.000px;">Edit</div>
<div class="t" style="left:94.00px;top:33.00px;font-size:14.5px;font-weight:400;color:#262626;letter-spacing:0.257px;">View</div>
<div class="t" style="left:144.20px;top:33.00px;font-size:14.5px;font-weight:400;color:#262626;letter-spacing:-0.438px;">Curve</div>
<div class="t" style="left:199.20px;top:33.00px;font-size:14.5px;font-weight:400;color:#262626;letter-spacing:-0.169px;">Surface</div>
<div class="t" style="left:266.50px;top:33.00px;font-size:14.5px;font-weight:400;color:#262626;letter-spacing:-0.195px;">SubD</div>
<div class="t" style="left:321.00px;top:33.00px;font-size:14.5px;font-weight:400;color:#262626;letter-spacing:0.090px;">Solid</div>
<div class="t" style="left:372.70px;top:33.00px;font-size:14.5px;font-weight:400;color:#262626;letter-spacing:-0.167px;">Mesh</div>
<div class="t" style="left:426.00px;top:33.00px;font-size:14.5px;font-weight:400;color:#262626;letter-spacing:0.340px;">Drafting</div>
<div class="t" style="left:498.20px;top:33.00px;font-size:14.5px;font-weight:400;color:#262626;letter-spacing:-0.003px;">Transform</div>
<div class="t" style="left:582.50px;top:33.00px;font-size:14.5px;font-weight:400;color:#262626;letter-spacing:0.128px;">Tools</div>
<div class="t" style="left:635.50px;top:33.00px;font-size:14.5px;font-weight:400;color:#262626;letter-spacing:-0.013px;">Analyze</div>
<div class="t" style="left:705.70px;top:33.00px;font-size:14.5px;font-weight:400;color:#262626;letter-spacing:-0.210px;">Render</div>
<div class="t" style="left:770.70px;top:33.00px;font-size:14.5px;font-weight:400;color:#262626;letter-spacing:0.454px;">Window</div>
<div class="t" style="left:844.20px;top:33.00px;font-size:14.5px;font-weight:400;color:#262626;letter-spacing:0.243px;">Help</div>
<div class="t" style="left:16.50px;top:57.00px;font-size:14.5px;font-weight:400;color:#0c0c0c;letter-spacing:0.054px;">Command: Copy</div>
<div class="t" style="left:16.50px;top:77.00px;font-size:14.5px;font-weight:400;color:#0c0c0c;letter-spacing:0.146px;">Point to copy from. Press Enter to use bounding box center ( Vertical=No  InPlace )</div>
<div class="t" style="left:16.50px;top:97.00px;font-size:14.5px;font-weight:400;color:#0c0c0c;letter-spacing:0.315px;">Point to copy to</div>
<div class="t" style="left:16.50px;top:117.00px;font-size:14.5px;font-weight:400;color:#0c0c0c;letter-spacing:0.090px;">Point to copy to. Press Enter when done ( FromLastPoint=No  UseLastDistance=No  UseLastDirection=No )</div>
<div class="t" style="left:16.50px;top:138.00px;font-size:14.5px;font-weight:700;color:#050505;letter-spacing:-0.029px;">Command:</div>
<div class="t" style="left:28.50px;top:167.00px;font-size:14.5px;font-weight:400;color:#6e6e72;letter-spacing:-0.045px;">Standard</div>
<div class="t" style="left:112.50px;top:167.00px;font-size:14.5px;font-weight:400;color:#6e6e72;letter-spacing:-0.059px;">Set View</div>
<div class="t" style="left:194.50px;top:167.00px;font-size:14.5px;font-weight:400;color:#6e6e72;letter-spacing:-0.545px;">CPlanes</div>
<div class="t" style="left:271.50px;top:167.00px;font-size:14.5px;font-weight:400;color:#262626;letter-spacing:-0.007px;">Display</div>
<div class="t" style="left:344.00px;top:167.00px;font-size:14.5px;font-weight:400;color:#6e6e72;letter-spacing:-0.219px;">Select</div>
<div class="t" style="left:408.50px;top:167.00px;font-size:14.5px;font-weight:400;color:#6e6e72;letter-spacing:0.252px;">Viewport Layout</div>
<div class="t" style="left:541.50px;top:167.00px;font-size:14.5px;font-weight:400;color:#6e6e72;letter-spacing:0.239px;">Visibility</div>
<div class="t" style="left:622.00px;top:167.00px;font-size:14.5px;font-weight:400;color:#6e6e72;letter-spacing:-0.059px;">Transform</div>
<div class="t" style="left:712.50px;top:167.00px;font-size:14.5px;font-weight:400;color:#6e6e72;letter-spacing:-0.027px;">Curve Tools</div>
<div class="t" style="left:814.00px;top:167.00px;font-size:14.5px;font-weight:400;color:#6e6e72;letter-spacing:-0.123px;">Surface Tools</div>
<div class="t" style="left:925.00px;top:167.00px;font-size:14.5px;font-weight:400;color:#6e6e72;letter-spacing:0.104px;">Solid Tools</div>
<div class="t" style="left:1020.50px;top:167.00px;font-size:14.5px;font-weight:400;color:#6e6e72;letter-spacing:-0.039px;">SubD Tools</div>
<div class="t" style="left:1119.50px;top:167.00px;font-size:14.5px;font-weight:400;color:#6e6e72;letter-spacing:0.042px;">Mesh Tools</div>
<div class="t" style="left:1218.50px;top:167.00px;font-size:14.5px;font-weight:400;color:#6e6e72;letter-spacing:-0.057px;">Render Tools</div>
<div class="t" style="left:1328.50px;top:167.00px;font-size:14.5px;font-weight:400;color:#6e6e72;letter-spacing:0.277px;">Drafting</div>
<div class="t" style="left:1407.50px;top:167.00px;font-size:14.5px;font-weight:400;color:#6e6e72;letter-spacing:0.101px;">New in V8</div>
<div class="t" style="left:8.00px;top:675.00px;font-size:14.5px;font-weight:400;color:#6e6e72;letter-spacing:-0.391px;">OSnap</div>
<div class="t" style="left:27.70px;top:728.00px;font-size:14.5px;font-weight:400;color:#262626;letter-spacing:-0.837px;">End</div>
<div class="t" style="left:27.70px;top:748.00px;font-size:14.5px;font-weight:400;color:#262626;letter-spacing:-0.159px;">Near</div>
<div class="t" style="left:27.70px;top:768.00px;font-size:14.5px;font-weight:400;color:#262626;letter-spacing:-0.153px;">Point</div>
<div class="t" style="left:27.70px;top:788.00px;font-size:14.5px;font-weight:400;color:#262626;letter-spacing:0.475px;">Mid</div>
<div class="t" style="left:27.70px;top:808.00px;font-size:14.5px;font-weight:400;color:#262626;letter-spacing:-0.770px;">Cen</div>
<div class="t" style="left:27.70px;top:828.00px;font-size:14.5px;font-weight:400;color:#262626;letter-spacing:-0.108px;">Int</div>
<div class="t" style="left:27.70px;top:848.00px;font-size:14.5px;font-weight:400;color:#262626;letter-spacing:-0.710px;">Perp</div>
<div class="t" style="left:27.70px;top:868.00px;font-size:14.5px;font-weight:400;color:#262626;letter-spacing:-0.864px;">Tan</div>
<div class="t" style="left:27.70px;top:888.00px;font-size:14.5px;font-weight:400;color:#262626;letter-spacing:-0.171px;">Quad</div>
<div class="t" style="left:27.70px;top:908.00px;font-size:14.5px;font-weight:400;color:#262626;letter-spacing:0.114px;">Knot</div>
<div class="t" style="left:27.70px;top:928.00px;font-size:14.5px;font-weight:400;color:#262626;letter-spacing:-0.135px;">Vertex</div>
<div class="t" style="left:27.70px;top:948.00px;font-size:14.5px;font-weight:400;color:#262626;letter-spacing:0.023px;">Project</div>
<div class="t" style="left:27.70px;top:989.00px;font-size:14.5px;font-weight:400;color:#262626;letter-spacing:0.063px;">Disable</div>
<div class="t" style="left:161.00px;top:230.00px;font-size:14.5px;font-weight:700;color:#1b1b1b;letter-spacing:0.700px;">Top</div>
<div class="t" style="left:200.50px;top:991.00px;font-size:14.5px;font-weight:400;color:#4e535b;letter-spacing:0.250px;">y</div>
<div class="t" style="left:237.00px;top:1030.00px;font-size:14.5px;font-weight:400;color:#4e535b;letter-spacing:0.250px;">x</div>
<div class="t" style="left:166.50px;top:1092.00px;font-size:14.5px;font-weight:400;color:#262626;letter-spacing:0.536px;">Top</div>
<div class="t" style="left:213.50px;top:1092.00px;font-size:14.5px;font-weight:400;color:#6e6e72;letter-spacing:-0.115px;">Perspective</div>
<div class="t" style="left:310.50px;top:1092.00px;font-size:14.5px;font-weight:400;color:#6e6e72;letter-spacing:0.131px;">Front</div>
<div class="t" style="left:366.00px;top:1092.00px;font-size:14.5px;font-weight:400;color:#6e6e72;letter-spacing:0.328px;">Right</div>
<div class="t" style="left:52.50px;top:1119.00px;font-size:14.5px;font-weight:400;color:#262626;letter-spacing:-0.427px;">CPlane</div>
<div class="t" style="left:182.50px;top:1119.00px;font-size:14.5px;font-weight:400;color:#262626;letter-spacing:0.027px;">x -4235.883  y -25244.693  z 0</div>
<div class="t" style="left:467.50px;top:1119.00px;font-size:14.5px;font-weight:400;color:#262626;letter-spacing:0.293px;">Millimeters</div>
<div class="t" style="left:599.00px;top:1119.00px;font-size:14.5px;font-weight:400;color:#262626;letter-spacing:0.113px;">cut 1</div>
<div class="t" style="left:820.00px;top:1119.00px;font-size:14.5px;font-weight:400;color:#262626;letter-spacing:-0.144px;">Grid Snap</div>
<div class="t" style="left:909.00px;top:1119.00px;font-size:14.5px;font-weight:400;color:#262626;letter-spacing:0.347px;">Ortho</div>
<div class="t" style="left:972.50px;top:1119.00px;font-size:14.5px;font-weight:400;color:#262626;letter-spacing:-0.237px;">Planar</div>
<div class="t" style="left:1037.50px;top:1119.00px;font-size:14.5px;font-weight:700;color:#262626;letter-spacing:-0.225px;">Osnap</div>
<div class="t" style="left:1107.50px;top:1119.00px;font-size:14.5px;font-weight:400;color:#262626;letter-spacing:-0.189px;">SmartTrack</div>
<div class="t" style="left:1206.00px;top:1119.00px;font-size:14.5px;font-weight:700;color:#262626;letter-spacing:0.040px;">Gumball (CPlane)</div>
<div class="t" style="left:1373.00px;top:1119.00px;font-size:14.5px;font-weight:400;color:#262626;letter-spacing:0.024px;">Auto CPlane (Object)</div>
<div class="t" style="left:1541.50px;top:1119.00px;font-size:14.5px;font-weight:400;color:#262626;letter-spacing:0.044px;">Record History</div>
<div class="t" style="left:1666.00px;top:1119.00px;font-size:14.5px;font-weight:400;color:#262626;letter-spacing:0.044px;">Filter</div>
<div class="t" style="left:1726.50px;top:1119.00px;font-size:14.5px;font-weight:400;color:#262626;letter-spacing:0.383px;width:119.5px;overflow:hidden;">Absolute tolerance</div>
<div class="t" style="left:1427.00px;top:229.00px;font-size:14.5px;font-weight:400;color:#6e6e72;letter-spacing:0.085px;">Properties: Object</div>
<div class="t" style="left:1426.50px;top:312.00px;font-size:18.5px;font-weight:400;color:#2e2e2e;letter-spacing:-0.328px;">Object</div>
<div class="t" style="left:1446.30px;top:342.00px;font-size:14.5px;font-weight:400;color:#262626;letter-spacing:-0.059px;">Type</div>
<div class="t" style="left:1446.30px;top:370.00px;font-size:14.5px;font-weight:400;color:#262626;letter-spacing:0.253px;">Name</div>
<div class="t" style="left:1446.30px;top:399.00px;font-size:14.5px;font-weight:400;color:#262626;letter-spacing:-0.316px;">Layer</div>
<div class="t" style="left:1446.30px;top:427.00px;font-size:14.5px;font-weight:400;color:#262626;letter-spacing:0.190px;">Display Color</div>
<div class="t" style="left:1446.30px;top:455.00px;font-size:14.5px;font-weight:400;color:#262626;letter-spacing:0.321px;">Display Mode</div>
<div class="t" style="left:1446.30px;top:483.00px;font-size:14.5px;font-weight:400;color:#262626;letter-spacing:0.109px;">Linetype</div>
<div class="t" style="left:1446.30px;top:510.00px;font-size:14.5px;font-weight:400;color:#262626;letter-spacing:-0.066px;">Linetype Scale</div>
<div class="t" style="left:1446.30px;top:536.00px;font-size:14.5px;font-weight:400;color:#262626;letter-spacing:0.109px;">Print Color</div>
<div class="t" style="left:1446.30px;top:564.00px;font-size:14.5px;font-weight:400;color:#262626;letter-spacing:0.253px;">Print Width</div>
<div class="t" style="left:1446.30px;top:592.00px;font-size:14.5px;font-weight:400;color:#262626;letter-spacing:-0.034px;">Section Style</div>
<div class="t" style="left:1446.30px;top:622.00px;font-size:14.5px;font-weight:400;color:#262626;letter-spacing:0.307px;">Hyperlink</div>
<div class="t" style="left:1670.20px;top:342.00px;font-size:14.5px;font-weight:400;color:#262626;letter-spacing:-0.214px;">301 curves</div>
<div class="t" style="left:1692.50px;top:398.00px;font-size:14.5px;font-weight:400;color:#262626;letter-spacing:-0.087px;">cut 1</div>
<div class="t" style="left:1716.40px;top:427.00px;font-size:14.5px;font-weight:400;color:#262626;letter-spacing:-0.383px;">Custom...</div>
<div class="t" style="left:1716.40px;top:536.00px;font-size:14.5px;font-weight:400;color:#262626;letter-spacing:-0.383px;">Custom...</div>
<div class="t" style="left:1670.20px;top:455.00px;font-size:14.5px;font-weight:400;color:#262626;letter-spacing:0.025px;">By View</div>
<div class="t" style="left:1670.20px;top:483.00px;font-size:14.5px;font-weight:400;color:#262626;letter-spacing:0.044px;">Continuous</div>
<div class="t" style="left:1670.20px;top:564.00px;font-size:14.5px;font-weight:400;color:#262626;letter-spacing:0.329px;">Hairline</div>
<div class="t" style="left:1670.20px;top:592.00px;font-size:14.5px;font-weight:400;color:#262626;letter-spacing:-0.304px;">By Layer</div>
<div class="t" style="left:1670.20px;top:510.00px;font-size:14.5px;font-weight:400;color:#262626;letter-spacing:-0.299px;">1.000</div>
<div class="t" style="left:1861.50px;top:624.00px;font-size:13px;font-weight:400;color:#262626;letter-spacing:-0.448px;">...</div>
<div class="t" style="left:1426.50px;top:651.00px;font-size:18.5px;font-weight:400;color:#2e2e2e;letter-spacing:-0.607px;">Render Mesh Settings</div>
<div class="t" style="left:1446.30px;top:680.00px;font-size:14.5px;font-weight:400;color:#262626;letter-spacing:-0.068px;">Custom Mesh</div>
<div class="t" style="left:1446.30px;top:708.00px;font-size:14.5px;font-weight:400;color:#262626;letter-spacing:0.037px;">Settings</div>
<div class="t" style="left:1753.00px;top:708.00px;font-size:14.5px;font-weight:400;color:#67676b;letter-spacing:0.281px;">Adjust</div>
<div class="t" style="left:1426.50px;top:737.00px;font-size:18.5px;font-weight:400;color:#2e2e2e;letter-spacing:-0.764px;">Rendering</div>
<div class="t" style="left:1446.30px;top:766.00px;font-size:14.5px;font-weight:400;color:#262626;letter-spacing:-0.318px;">Casts shadows</div>
<div class="t" style="left:1446.30px;top:791.00px;font-size:14.5px;font-weight:400;color:#262626;letter-spacing:-0.232px;">Receives shadows</div>
<div class="t" style="left:1426.50px;top:816.00px;font-size:18.5px;font-weight:400;color:#2e2e2e;letter-spacing:-0.478px;">Isocurve Density</div>
<div class="t" style="left:1446.30px;top:845.00px;font-size:14.5px;font-weight:400;color:#262626;letter-spacing:-0.023px;">Density</div>
<div class="t" style="left:1670.20px;top:845.00px;font-size:14.5px;font-weight:400;color:#a9adb4;letter-spacing:-0.278px;">0</div>
<div class="t" style="left:1446.30px;top:870.00px;font-size:14.5px;font-weight:400;color:#262626;letter-spacing:-0.080px;">Show surface isocurve</div>
<div class="t" style="left:1634.00px;top:912.00px;font-size:14.5px;font-weight:400;color:#4a4a4e;letter-spacing:0.300px;">Match</div>
<div class="t" style="left:1631.00px;top:951.00px;font-size:14.5px;font-weight:400;color:#4a4a4e;letter-spacing:0.239px;">Details</div>

</div></body></html>
